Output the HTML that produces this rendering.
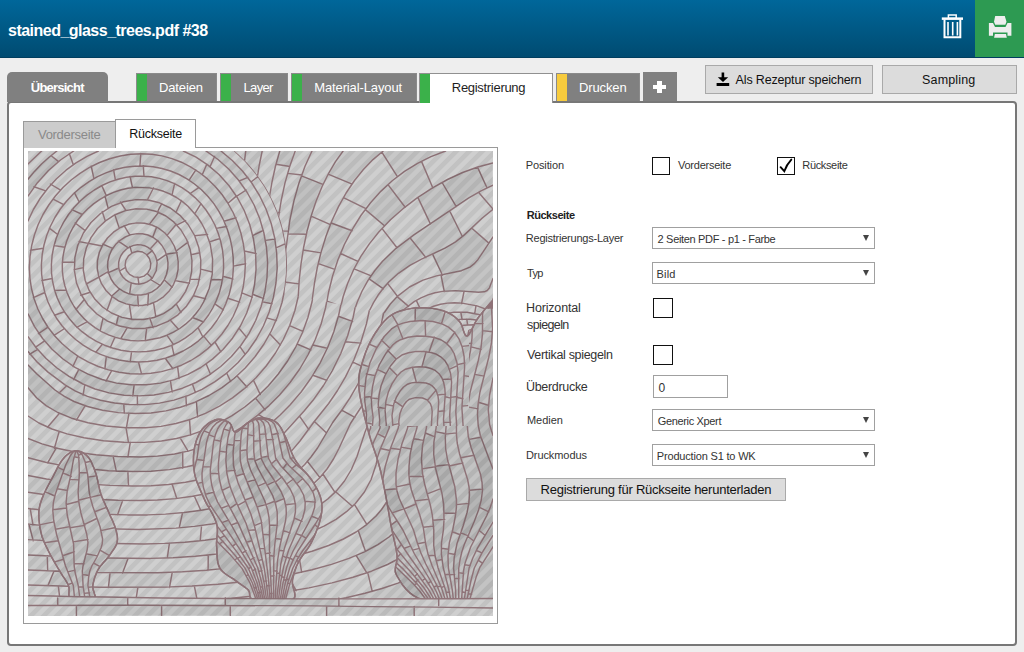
<!DOCTYPE html>
<html><head><meta charset="utf-8">
<style>
*{margin:0;padding:0;box-sizing:border-box}
html,body{width:1024px;height:652px;overflow:hidden;background:#eeeeee;font-family:"Liberation Sans",sans-serif;position:relative}
.a{position:absolute}
.t{position:absolute;line-height:1;white-space:nowrap}
.tab{position:absolute;top:73px;height:28px;background:#808080;border:1px solid #8a8a8a;border-bottom:none}
.bar{position:absolute;left:0;top:0;width:10px;bottom:0;background:#3bb14a}
.btn{position:absolute;background:#dcdcdc;border:1px solid #a9a9a9}
.cb{position:absolute;border:1.5px solid #111;background:#fff}
.sel{position:absolute;left:652px;width:223px;height:22px;border:1px solid #a0a0a0;background:#fff}
.sel i{position:absolute;right:5px;top:7px;width:0;height:0;border-left:3.5px solid transparent;border-right:3.5px solid transparent;border-top:6px solid #444}
</style></head><body>
<div class="a" style="left:0;top:0;width:1024px;height:58px;background:linear-gradient(#00679a,#004b71);border-bottom:1px solid #003e5f"></div>
<div class="a" style="left:975px;top:0;width:49px;height:57px;background:#2d9a52"></div>
<svg class="a" style="left:930px;top:5px" width="40" height="40" viewBox="930 5 40 40">
 <rect x="941.8" y="17.4" width="21.2" height="2.5" fill="#fff"/>
 <rect x="948.4" y="15" width="7.8" height="3.4" fill="none" stroke="#fff" stroke-width="1.5"/>
 <path d="M944.5 19.5 V37.2 H960.3 V19.5" fill="none" stroke="#fff" stroke-width="2"/>
 <rect x="947.2" y="22" width="1.6" height="13.5" fill="#fff"/>
 <rect x="951.9" y="22" width="1.6" height="13.5" fill="#fff"/>
 <rect x="956.6" y="22" width="1.6" height="13.5" fill="#fff"/>
</svg>
<svg class="a" style="left:980px;top:8px" width="40" height="40" viewBox="980 8 40 40">
 <path d="M995.2 16.1 H1004.8 L1006.5 21.8 L1005.3 24.7 H995.2 L994 21.8 Z" fill="#eeeeee"/>
 <path d="M988.9 23 H993 L995 26.9 H1005.5 L1007.5 23 H1011.4 V35.7 H1007.5 V32.6 H993 V35.7 H988.9 Z" fill="#eeeeee"/>
 <path d="M994.9 34 H1006 L1006.8 37.7 H994.1 Z" fill="#eeeeee"/>
</svg>
<div class="t" style="left:8.0px;top:22.6px;font-size:16px;letter-spacing:-0.515px;color:#ffffff;font-weight:bold">stained_glass_trees.pdf #38</div>
<div class="a" style="left:7px;top:101px;width:1010px;height:545px;background:#fff;border:2px solid #777;border-radius:4px"></div>
<div class="a" style="left:7px;top:72px;width:101px;height:30px;background:#808080;border-radius:5px 5px 0 0"></div>
<div class="t" style="left:30.8px;top:80.5px;font-size:13px;letter-spacing:-0.775px;color:#ffffff;font-weight:bold">Übersicht</div>
<div class="tab" style="left:136px;width:81px"><div class="bar"></div></div>
<div class="tab" style="left:220px;width:68px"><div class="bar"></div></div>
<div class="tab" style="left:291px;width:126px"><div class="bar"></div></div>
<div class="tab" style="left:419px;width:134px;height:30px;background:#fff;border-color:#909090"><div class="bar"></div></div>
<div class="tab" style="left:556px;width:84px"><div class="bar" style="background:#f7cb3d"></div></div>
<div class="tab" style="left:643px;top:72px;width:34px;height:29px;border:none"></div>
<div class="a" style="left:653.3px;top:84.9px;width:13.1px;height:4.1px;background:#fff"></div>
<div class="a" style="left:657.4px;top:80.7px;width:4.6px;height:12.3px;background:#fff"></div>
<div class="t" style="left:158.9px;top:80.9px;font-size:13px;letter-spacing:-0.1px;color:#ffffff">Dateien</div><div class="t" style="left:243.5px;top:80.9px;font-size:13px;letter-spacing:-0.65px;color:#ffffff">Layer</div><div class="t" style="left:314.2px;top:80.9px;font-size:13px;letter-spacing:-0.114px;color:#ffffff">Material-Layout</div><div class="t" style="left:451.8px;top:80.9px;font-size:13px;letter-spacing:-0.3px;color:#1e1e1e">Registrierung</div><div class="t" style="left:578.9px;top:80.9px;font-size:13px;letter-spacing:-0.1px;color:#ffffff">Drucken</div>
<div class="btn" style="left:705px;top:65px;width:168px;height:29px"></div>
<svg class="a" style="left:716px;top:72px" width="14" height="15" viewBox="0 0 14 15">
 <rect x="5.6" y="0.5" width="2.6" height="6" fill="#000"/>
 <path d="M1.8 5.2 H12.2 L7 10 Z" fill="#000"/>
 <rect x="0.6" y="11" width="12.6" height="3" fill="#000"/>
</svg>
<div class="t" style="left:735.6px;top:74.4px;font-size:12.5px;letter-spacing:-0.162px;color:#111111">Als Rezeptur speichern</div>
<div class="btn" style="left:882px;top:65px;width:135px;height:29px"></div>
<div class="t" style="left:922.0px;top:74.4px;font-size:12.5px;letter-spacing:0.171px;color:#111111">Sampling</div>
<div class="a" style="left:23px;top:121px;width:93px;height:27px;background:#cccccc;border:1px solid #9a9a9a;border-bottom:none"></div>
<div class="a" style="left:115px;top:119px;width:81px;height:29px;background:#fff;border:1px solid #9a9a9a;border-bottom:none"></div>
<div class="t" style="left:38.0px;top:128.3px;font-size:13px;letter-spacing:-0.3px;color:#8a8a8a">Vorderseite</div><div class="t" style="left:129.2px;top:127.7px;font-size:12.5px;letter-spacing:-0.225px;color:#111111">Rückseite</div>
<div class="a" style="left:23px;top:147px;width:475px;height:477px;border:1px solid #9a9a9a;border-top:none"></div>
<div class="a" style="left:196px;top:147px;width:302px;height:1px;background:#9a9a9a"></div>
<svg class="a" style="left:28px;top:151px" width="465" height="465" viewBox="28 151 465 465">
<defs>
<pattern id="stp" width="9.19" height="20" patternUnits="userSpaceOnUse" patternTransform="rotate(45)"><rect width="9.19" height="20" fill="#cfcfcf"/><rect x="4.6" width="4.6" height="20" fill="#c2c2c2"/></pattern>
<pattern id="stpd" width="9.19" height="20" patternUnits="userSpaceOnUse" patternTransform="rotate(45)"><rect width="9.19" height="20" fill="#c3c3c3"/><rect x="4.6" width="4.6" height="20" fill="#b4b4b4"/></pattern>
<clipPath id="skyc"><path d="M234.5 151L493 151L493 334.7L284.2 293.4L284.2 293.4L285.1 288L285.9 282.6L286.5 277.2L286.8 271.8L287 266.3L287 260.9L286.7 255.4L286.3 250L285.7 244.6L284.8 239.2L283.8 233.8L282.6 228.5L281.2 223.2L279.6 218L277.8 212.9L275.8 207.8L273.6 202.8L271.3 197.9L268.8 193.1L266.1 188.3L263.2 183.7L260.1 179.2L256.9 174.7L253.6 170.5L250.1 166.3L246.4 162.3L242.6 158.4L238.6 154.6L234.5 151Z"/></clipPath>
<clipPath id="sunc"><path clip-rule="evenodd" d="M28 151H493V616H28ZM234.5 151L493 151L493 334.7L284.2 293.4L284.2 293.4L285.1 288L285.9 282.6L286.5 277.2L286.8 271.8L287 266.3L287 260.9L286.7 255.4L286.3 250L285.7 244.6L284.8 239.2L283.8 233.8L282.6 228.5L281.2 223.2L279.6 218L277.8 212.9L275.8 207.8L273.6 202.8L271.3 197.9L268.8 193.1L266.1 188.3L263.2 183.7L260.1 179.2L256.9 174.7L253.6 170.5L250.1 166.3L246.4 162.3L242.6 158.4L238.6 154.6L234.5 151Z"/></clipPath>
<clipPath id="t0"><path d="M75.2 450.8L76.7 450.8L78.3 450.9L79.9 451.4L81.5 452L83.1 452.8L84.6 453.8L86.1 454.9L87.4 456.2L88.6 457.7L89.8 459.4L90.9 461.2L91.9 463.3L92.8 465.5L93.8 467.7L94.6 470L95.5 472.4L96.3 474.9L97 477.5L97.6 480.2L98.2 483L98.8 485.9L99.4 488.7L100.1 491.4L100.9 494L101.8 496.5L102.8 499L103.8 501.4L104.9 503.8L105.9 506.1L107 508.4L108 510.7L109 512.9L109.9 515.1L110.9 517.2L111.9 519.3L112.8 521.3L113.6 523.3L114.4 525.2L115.1 527.1L115.7 529L116.2 530.8L116.6 532.6L117 534.3L117.3 535.9L117.4 537.6L117.5 539.2L117.3 540.8L117 542.5L116.5 544.2L115.7 545.9L114.8 547.6L113.8 549.2L112.6 550.9L111.4 552.6L110.2 554.3L109 556L107.7 557.7L106.4 559.3L104.9 560.9L103.4 562.6L102 564.2L100.6 565.9L99.3 567.7L98.2 569.5L97.2 571.4L96.3 573.4L95.5 575.5L94.7 577.5L94.1 579.6L93.6 581.7L93.1 583.7L92.8 585.7L92.8 587.7L93.2 589.7L93.9 591.8L94.5 593.9L95.1 595.8L95.3 597.5L95 598.9L94.1 600L92.3 600.8L89.6 601.3L86.4 601.7L82.9 601.8L79.4 601.7L76.1 601.3L73.3 600.8L71.2 600L69.9 598.9L69.2 597.4L68.9 595.6L68.9 593.7L69 591.6L69.1 589.6L69 587.5L68.5 585.7L67.8 584L66.9 582.4L66 580.8L65 579.2L63.9 577.6L62.7 575.9L61.6 574.1L60.4 572.2L59.2 570.1L57.8 567.9L56.4 565.5L55 563.1L53.6 560.6L52.2 558.2L50.8 555.7L49.6 553.3L48.4 551L47.3 548.6L46.1 546.3L45 544L44 541.7L43.1 539.3L42.2 536.9L41.5 534.4L40.9 531.8L40.3 529.1L39.8 526.3L39.4 523.5L39.1 520.7L38.9 518L38.8 515.4L38.8 512.9L38.9 510.6L39.2 508.5L39.6 506.6L40 504.6L40.6 502.7L41.3 500.8L42 498.8L42.8 496.7L43.7 494.5L44.8 492.2L45.9 489.8L47.1 487.4L48.4 485L49.7 482.6L51 480.2L52.3 477.8L53.6 475.4L54.9 472.8L56.2 470.2L57.5 467.7L58.9 465.2L60.3 462.9L61.7 460.7L63.1 458.9L64.5 457.3L66 455.8L67.5 454.5L69.1 453.3L70.6 452.4L72.1 451.6L73.7 451.1Z"/></clipPath>
<clipPath id="t1"><path d="M216.6 419.5L218.3 419.2L220 419.2L221.7 419.5L223.4 419.9L225 420.4L226.5 421.1L227.9 421.8L229.2 422.6L230.2 423.6L231.1 425L231.7 426.5L232.3 428.1L232.9 429.6L233.6 430.9L234.4 431.8L235.5 432.1L236.8 431.8L238.2 430.9L239.8 429.7L241.5 428.2L243.2 426.6L244.9 425.1L246.6 423.7L248.2 422.6L249.8 421.7L251.3 420.9L252.8 420.1L254.3 419.4L255.8 418.8L257.4 418.3L259.1 418L260.8 417.9L262.7 418L264.7 418.2L266.8 418.5L268.9 419L271 419.6L273 420.4L274.9 421.4L276.6 422.6L278.1 424L279.4 425.6L280.6 427.4L281.8 429.4L282.8 431.5L283.9 433.7L285 436L286.1 438.4L287.2 440.9L288.3 443.6L289.4 446.4L290.4 449.2L291.5 452.2L292.7 455L294 457.8L295.5 460.5L297.2 463L299.1 465.5L301.2 467.9L303.4 470.2L305.6 472.5L307.6 474.8L309.6 477.2L311.3 479.5L312.9 481.9L314.3 484.2L315.7 486.6L317 488.9L318.2 491.3L319.2 493.7L320.1 496L320.8 498.4L321.3 500.7L321.7 503L321.9 505.2L322 507.5L321.9 509.8L321.7 512.2L321.3 514.7L320.8 517.4L320.1 520.3L319.2 523.4L318.1 526.7L316.8 530.1L315.5 533.4L314.1 536.7L312.7 539.8L311.3 542.7L309.8 545.4L308.2 547.9L306.5 550.3L304.8 552.5L303.1 554.8L301.5 557L300 559.3L298.7 561.6L297.6 564L296.5 566.3L295.6 568.7L294.8 571.1L294 573.4L293.4 575.8L292.8 578.2L292.4 580.6L292.4 583.1L292.8 585.9L293.6 588.7L294.4 591.5L294.9 594.1L294.9 596.5L294.2 598.5L292.4 600L289.3 601L284.8 601.6L279.6 601.9L273.8 601.8L268.1 601.6L262.6 601.2L258 600.6L254.5 600L252.2 599.2L250.9 598.2L250.1 597L249.8 595.6L249.6 594.1L249.5 592.7L249.1 591.3L248.2 590L246.9 588.8L245.5 587.7L244 586.6L242.4 585.5L240.8 584.3L239 583.2L237.3 581.9L235.5 580.6L233.6 579.2L231.5 577.9L229.2 576.5L227 575L224.8 573.5L222.8 571.8L221.1 570L219.7 567.9L218.7 565.6L218 563L217.5 560.3L217.2 557.4L217 554.5L216.9 551.5L216.8 548.6L216.6 545.8L216.5 543.1L216.7 540.4L216.9 537.7L217.2 534.9L217.4 532.2L217.4 529.5L217.2 526.6L216.6 523.7L215.6 520.7L214.3 517.6L212.7 514.4L210.9 511.2L209.1 508L207.2 504.8L205.5 501.6L204 498.4L202.6 495.2L201.2 492.1L199.8 488.9L198.5 485.8L197.2 482.7L196.1 479.5L195.2 476.4L194.5 473.2L194 470L193.6 466.7L193.5 463.4L193.4 460.2L193.5 456.9L193.7 453.8L194.1 450.8L194.5 447.9L195.1 445.2L195.8 442.5L196.6 439.9L197.6 437.5L198.6 435.1L199.8 432.9L201.1 430.9L202.4 429L203.9 427.3L205.5 425.7L207.3 424.2L209.2 422.9L211.1 421.7L213 420.8L214.9 420Z"/></clipPath>
<clipPath id="t2"><path d="M358.8 386.7L358.7 382.5L358.8 378.6L359.2 375.1L359.8 371.7L360.6 368.5L361.4 365.4L362.4 362.2L363.4 359L364.5 355.7L365.7 352.3L367 349L368.4 345.8L369.9 342.6L371.5 339.5L373.2 336.5L374.9 333.7L376.7 331L378.5 328.3L380.4 325.8L382.4 323.3L384.4 321.1L386.5 318.9L388.7 317L391 315.3L393.4 313.8L395.8 312.6L398.4 311.6L401.1 310.7L403.7 310L406.4 309.4L409.1 308.9L411.7 308.4L414.3 308L417 307.8L419.7 307.7L422.4 307.7L425 307.8L427.6 307.9L430.1 308.1L432.5 308.4L434.8 308.7L437 309.1L439.1 309.6L441.1 310.1L443.1 310.7L445 311.4L446.8 312.2L448.6 313L450.3 313.9L451.9 314.9L453.4 315.9L454.9 317L456.3 318.2L457.6 319.5L458.8 320.8L460 322.2L461.1 323.9L462 326.1L462.8 328.4L463.5 330.8L464.3 333L465.1 334.7L466 335.8L467 336L468.2 335.3L469.4 333.7L470.7 331.6L472 329L473.4 326.1L474.9 323.2L476.4 320.5L478 318L479.8 315.6L481.8 313.1L483.9 310.5L486.1 307.9L488.2 305.4L490.1 303.2L491.7 301.4L493 300L493.9 297.1L494.5 291.7L494.8 285.5L494.9 280.1L495 277.2L494.9 278.5L494.9 285.5L495 300L495.6 325.2L496.8 360.9L498.3 403.7L499.6 450L500.3 496.3L500 539.1L498.4 574.8L495 600L489.2 614.5L481.2 621.7L471.6 623L461.2 620.2L450.5 614.9L440.3 608.7L431.3 603.2L424 600L418.3 598.1L413.5 595.6L409.5 592.6L406.1 589.3L403.2 585.8L400.8 582.4L398.8 579L397 576L395.7 573.3L395.2 570.8L395.3 568.3L395.7 565.9L396.3 563.4L396.8 560.8L397.1 558L397 555L396.5 551.7L395.9 548.2L395.2 544.5L394.4 540.8L393.5 536.9L392.6 532.9L391.8 529L391 525L390.2 521L389.5 516.8L388.8 512.6L388 508.3L387.2 504.1L386.5 499.9L385.8 495.9L385 492L384.3 488.4L383.6 485L383 481.8L382.3 478.6L381.6 475.4L380.9 472.2L380 468.7L379 465L377.9 461.1L376.6 457L375.2 452.8L373.7 448.5L372.2 444.1L370.7 439.5L369.3 434.8L368 430L366.7 424.9L365.2 419.4L363.8 413.7L362.4 407.9L361.2 402.2L360.1 396.6L359.3 391.4Z"/></clipPath>
<clipPath id="t2c0"><path clip-rule="evenodd" d="M350 295H469V426H350Z"/></clipPath>
<clipPath id="t2c1"><path clip-rule="evenodd" d="M20 140H500V620H20Z M350 295H469V426H350Z"/></clipPath>
</defs>
<rect x="28" y="151" width="465" height="465" fill="url(#stp)"/>
<g fill="none" stroke="#8f7378" stroke-width="1.45" stroke-linecap="round" stroke-linejoin="round">
<path clip-path="url(#sunc)" d="M139.3 277.5L144 276.1L147.8 273L150.2 268.5L150.8 263.5L149.4 258.5L146.5 254.5L142.5 252L137.5 251.3L132.5 252.8L128.5 255.9L125.8 260.5L125.1 265.5L126.4 270.5L129.5 274.4L134 276.9L139.3 277.5M140 284L143.5 283.3L147 281.9L150 280L153 277L156.3 270.5L157.1 263L156.5 259L155.2 255.5L153.4 252.5L150.8 249.5L148 247.4L144.5 245.7L141 244.9L137.5 244.7L133.5 245.4L130 246.8L126.5 249L123.5 251.9L121 255.5L119.5 259L118.7 262.5L118.6 266.5L119.2 270L120.6 273.5L122.9 277L125.5 279.6L129 281.9L132.5 283.3L136 284L140 284M141.1 295L146.5 294L152 291.8L157 288.5L161 284.5L164.1 280L166.5 274.5L167.8 268.5L168 262.5L167 256.5L164.9 250.5L161.9 245.5L158 241.1L153.3 237.5L148 235L142.5 233.7L137 233.6L131 234.6L125.5 236.8L120 240.3L115.5 244.6L111.7 250L109.3 255.5L107.9 261.5L107.7 267.5L108.8 273.5L111 279L114.3 284L118.5 288.2L123.5 291.5L129 293.8L135 295L141.1 295M142.2 305.5L150 304L157 301.1L163.5 296.8L169 291.3L173.3 285L176.4 277.5L178.1 269.5L178.2 261.5L176.9 253.5L174.3 246L170.2 239L164.9 233L158.5 228.2L151.8 225L144.5 223.2L136.5 222.9L128.5 224.3L120.6 227.5L113.5 232.2L107.5 238L102.7 245L99.3 252.5L97.5 260.5L97.3 268.5L98.7 276.5L101.5 283.7L106 290.5L111.5 296.1L118.5 300.8L126 303.9L134 305.5L142.2 305.5M143.7 319.5L154 317.5L163.5 313.6L172 308L179.6 300.5L185.5 291.6L189.5 282L191.7 271.5L192 260.5L190.2 249.5L186.6 239.5L181 230L174 222.2L165.9 216L156.5 211.5L146.5 209.1L136 208.7L125.5 210.6L115 214.7L105.5 220.9L97.5 228.5L91 237.6L86.3 248L83.7 259L83.3 270L85.2 280.5L89.2 290.5L95 299.3L102.6 307L111.5 313L122 317.4L133 319.5L143.7 319.5M144.6 328.5L156.5 326.2L168 321.4L178 314.8L186.5 306.2L193.3 296L198 284.7L200.5 272.5L200.8 260L198.8 247.5L194.6 235.5L188.1 224.5L180 215.3L170.3 208L159.5 202.8L148 200L136 199.6L123.5 201.7L111.5 206.4L100.5 213.5L91 222.5L83.4 233L77.9 245L74.9 257.5L74.4 270.5L76.5 283L81.1 294.5L87.9 305L96.9 314L107.5 321.1L119.5 326L132 328.5L144.6 328.5M145.8 340.5L160 337.7L167 335.2L173.5 332.2L179.7 328.5L185.5 324.2L190.7 319.5L195.6 314L200 308.1L203.6 302L209.2 288.5L212.3 274L212.6 259L210.2 244L205.1 230L201.7 223.5L197.5 217L188 206.2L182.5 201.6L176.5 197.5L170 194L163.5 191.3L156.5 189.2L149.5 187.9L135.5 187.4L128 188.3L120.5 190L113.5 192.4L106.5 195.5L100 199.3L93.5 203.9L87.6 209L82.3 214.5L77.5 220.5L73 227.5L69.4 234.5L66.6 241.5L64.4 249L63 256.5L62.3 264L62.4 271.5L63.3 279L64.9 286L67.2 293L70.3 300L74.1 306.5L78.5 312.5L83.5 318.1L89 323.2L95 327.6L101.5 331.6L108.5 334.9L115.5 337.4L123 339.3L130.5 340.5L138 340.9L145.8 340.5M147 351.5L155.5 350.2L163.5 348.2L171 345.6L178.5 342.1L185.5 337.9L192.2 333L198.2 327.5L203.7 321.5L208.6 315L212.8 308L216.4 300.5L219.4 292.5L221.5 284.5L223 276L223.6 267.5L223.4 258.5L222.5 250L220.7 241.5L218.1 233L214.9 225L210.9 217.5L206 210L200.8 203.5L195 197.6L188.5 192.1L182 187.7L174.5 183.7L167 180.6L159.5 178.4L151.5 176.8L143.5 176.2L135 176.3L126.5 177.3L118 179.2L110 181.9L102 185.5L94.2 190L87 195.1L80.2 201L74 207.5L68.5 214.5L63.5 222.3L59.5 230L56.1 238.5L53.7 247L52.1 255.5L51.4 264.5L51.5 273L52.6 281.5L54.5 289.9L57.3 298L60.7 305.5L65 312.8L70 319.6L75.7 326L82 331.7L89 336.9L96.5 341.4L104.5 345.2L112.5 348L121 350.2L129.5 351.5L138.5 351.9L147 351.5M148 361.5L157 360.2L166 358L174.5 355L183.1 351L191 346.3L198.5 340.8L205.4 334.5L211.5 327.8L216.9 320.5L221.7 312.5L225.7 304L229 295L231.3 286L232.8 276.5L233.4 267L233.2 257.5L232.1 248L230.1 238.5L227.2 229L223.5 220L219 211.6L214 203.9L208 196.5L201.5 189.8L194.5 184L187 178.9L179 174.5L170.5 171L162 168.5L153 166.8L144 166L134.5 166.2L125 167.3L115.5 169.5L106.5 172.6L97.5 176.6L89 181.6L81 187.3L73.5 193.8L66.5 201.2L60.3 209L54.9 217.5L50.3 226.5L46.7 235.5L44 245L42.2 254.5L41.4 264.5L41.6 274L42.8 283.5L44.8 292.5L47.8 301.5L51.7 310L56.5 318.2L62.2 326L68.5 333L75.6 339.5L83.5 345.3L91.5 350.1L100.5 354.4L109.5 357.6L119 360L128.5 361.5L138.5 362L148 361.5M140.8 374L151 373.3L161.5 371.6L171.5 368.9L181.5 365.2L190.9 360.5L199.5 355.1L207.5 348.9L215 341.9L221.9 334L227.9 325.5L233.1 316.5L237.3 307L240.8 297L243.3 286.5L244.7 276L245.3 265L244.8 254L243.3 243.5L240.9 233L237.5 222.5L233.1 212.5L227.8 203L222 194.5L215 186.2L207.5 178.9L199.4 172.5L190.5 166.8L181.5 162.2L172 158.6L162 155.9L152 154.3L141.5 153.7L130.5 154.3L120 156L109.5 158.7L99.5 162.5L89.5 167.4L80 173.3L71.2 180L63 187.5L55.4 196L48.8 205L43 214.5L38.2 224.5L34.4 235L31.7 245.5L30 256.5L29.4 267.5L29.9 278L31.5 288.5L34.2 299L37.9 309L42.6 318.5L48.2 327.5L54.8 336L62 343.5L70.1 350.5L79 356.8L88.5 362.2L98.3 366.5L108.5 369.9L119 372.3L130 373.7L140.8 374M98.4 151L87 156.3L76 162.8L66 170.2L56.5 178.7L48 188L40.1 198.5L33.4 209.5L28 220.9M28 313.9L34.5 326.6L42.6 338.5L52 349.2L63 359L75 367.3L88 374.1L102 379.5L116.5 383.1L131 384.8L146 384.8L160.5 383.1L174.5 379.6L188 374.4L200.8 367.5L212.5 359.1L223 349.5L232.5 338.2L240.4 326L246.7 313L251.5 299L254.6 284.5L256 269.5L255.6 254L253.5 239L249.7 224.5L244.2 210.5L237.3 197.5L228.9 185.5L219 174.5L208 165.1L196 157.2L183.3 151M73.7 151L60.5 160L48.5 170.5L37.5 182.7L28 196M28 336.6L36.4 348L46.1 358.5L57 368L69 376.3L83 384L95 389L109 392.9L124 395.2L139.5 395.9L154 395L168.5 392.4L182.5 388.2L196 382.5L209 375.1L220.7 366.5L231.4 356.5L240.8 345.5L249 333.4L255.7 320.5L261.1 306.5L264.9 292L267 277.5L267.6 262.5L266.5 247.5L263.9 233L259.7 218.5L254.1 205L246.9 192L238.4 180L228.6 169L218 159.5L205.9 151M56.9 151L49 157.2L41.5 164L34.5 171.4L28 179.2M28 351.6L37.5 362.4L48 372.1L65 384.8L75.5 391.1L87.5 396.4L100.5 400.3L114.5 403L129.5 404.5L145 404.6L159.5 403.1L174 400.1L188.5 395.4L202 389.3L215 381.7L227 372.8L238.1 362.5L248 351L256.3 339L263.4 326L269.2 312L273.4 297.5L276 283L277.2 268L276.7 253L274.7 238L271.2 223.5L266 209L259.5 195.5L251.8 183L242.5 171L232.3 160.5L221 151M41.6 151L28 164.1M28 365L36.9 374L55 390L64 396.2L74 401.5L87.5 406.5L102.5 410.2L118.5 412.6L135.5 413.5L151 413L166 410.9L180.5 407.3L195 402.2L209 395.5L222 387.6L234 378.5L245.2 368L255.2 356.5L264 344L271.3 331L277.4 317L282 302.5L285.1 287.5L286.7 272.5L286.7 257L285.2 242L282.1 227L277.6 212.5L271.5 198.5L264.3 185.5L255.6 173L245.7 161.5L234.6 151M28 387.8L36.5 397.7L46 405.6L57.7 412.5L71.5 418.2L88 422.8L106 426L126 427.7L145.5 427.8L161 426.4L176 423.5L191 419.2L205.5 413.4L219.5 406.2L232.5 397.9L244.6 388.5L256 377.7L266.2 366L275.5 353L283.3 339.5L289.7 325.5L294.9 310.5L298.5 295.5L300.8 280L301.5 264.5L300.8 249L298.5 233.5L294.9 218.5L289.7 203.5L283 189L275.2 175.5L266 162.8L255.7 151M28 416L38.9 423L52 429L67 433.9L84 437.8L103.5 440.7L124 442.2L144 442.4L161.5 441L176.5 438.5L190.5 434.9L204 430.1L217.5 423.9L232 415.7L244.7 407L256.9 397L268.1 386L278.3 374L287.6 361L295.7 347L302.5 332.5L307.9 317.5L312 302L314.7 286L315.9 270L315.7 254L314 238L311 222.5L306.5 207L300.6 192L293.3 177.5L284.9 164L275.1 151M28 438.4L42 443.9L58.3 448.5L76.5 452.2L96 454.8L118 456.5L140.5 457L157.5 456.1L174.5 454L189 450.9L203 446.8L216 441.7L228.5 435.4L241.5 427.3L257.5 415.4L269 405.6L279.5 395L290.1 382.5L299.7 369L308.2 354.5L315.3 339.5L321.1 324L325.5 308L328.5 292L330.2 275.5L330.4 259L329.2 242.5L326.6 226L322.6 210L317.3 194.5L310.5 179.1L302.5 164.5L293.5 151M28 457.7L45.5 462.3L65 466.1L86 468.8L108.5 470.7L131.5 471.5L151 471.2L169.5 469.6L187 466.8L202 463.2L216 458.6L229 453.1L241.4 446.5L251.5 439.8L261.5 431.9L280.1 415L290 405L301.1 392L311.1 378L320 363.1L327.5 347.8L333.7 332L338.6 315.5L342.2 298.5L344.3 281.5L345 264.5L344.3 247.5L342.2 230.5L338.6 213.5L333.7 197L327.4 181L319.8 165.5L311.1 151M28 475.5L46.5 479L66.5 481.9L88 484L110 485.4L132.5 486L151 485.7L168.5 484.5L185.5 482.3L201 479.3L216 475.3L229.5 470.6L242.2 465L253.5 458.8L264.1 451.5L274 443.2L283.5 433.7L304.1 411L313 400.3L323.5 385.5L332.5 370.5L340.8 353.5L347.6 336L353.1 317.5L356.8 299L359 280L359.5 260.5L358.3 241.5L355.5 222.5L351 203.7L344.9 185.5L337.4 168L328.2 151M28 492.2L49 495.3L71 497.6L94 499.3L118 500.3L140.5 500.5L157.5 500L175.5 498.6L192.5 496.3L208.5 493.3L224 489.4L238 484.9L251.1 479.5L262.8 473.5L273.5 466.7L283.2 459L292 450.4L300 441L313.9 422L328.7 403.5L337.5 390.5L345.5 376.9L353.8 360L360.9 342L366.4 324L370.4 305.5L373 286L374 266L373.3 246L370.8 226L366.8 206.5L361.1 187.5L353.8 169L344.9 151M28 508.4L51.5 511L76 513L101.5 514.3L127.5 514.9L147.5 514.9L165.5 514.1L184 512.5L201.5 510.2L218.8 507L235 503L250 498.3L263.3 493L275.5 486.9L286.5 480.1L296 472.8L304.7 464.5L311 457L317.5 448L332.7 422.5L342.6 409L350 397.9L360.8 379L368.5 362.5L375.2 345L380.6 327L384.5 309L387.3 289L388.5 268.5L388 248L385.8 228L382 208L376.7 188.5L369.8 169.5L361.3 151M28 524.1L54 526.5L81.5 528.1L138.5 529.5L176 528.1L194.5 526.4L212 524L230 520.7L247 516.6L262.5 511.9L277 506.4L289.5 500.4L301 493.5L311 486L319.5 478L327 469L333.5 459L338.7 449L350.5 423.5L365.7 400L377.2 378.5L384.4 362L390.3 345.5L395.2 328.5L398.9 311L401.7 291L402.9 270.5L402.6 250L400.7 229.5L397.2 209.5L392.2 189.5L385.6 170L377.5 151M28 539.6L85 543L144 544L164.5 543.4L185 542.2L205 540.2L224 537.6L243 534.2L261 530L277.5 525.1L292.5 519.5L305.5 513.5L317.5 506.6L327.8 499L336.5 490.9L344.5 481L351.4 469.5L357 456.5L364.9 432.5L368.2 424L383.8 397.5L394.9 374.5L401 359L406.2 343L410.4 327L413.7 310.5L416.3 290.5L417.4 270L417.1 249.5L415.3 229.5L412 209.5L407.2 189.5L401 170L393.4 151M28 554.9L89 557.8L150.5 558.4L173 557.7L195.5 556.2L217 554L237.5 551.2L258 547.5L277 543.2L294.5 538.1L309.9 532.5L324 526.1L336 519.3L346.5 511.7L355.4 503.5L364.4 492L371.1 479.5L376.1 464.5L382.4 435L385.5 424.5L387.2 420.5L395 407.3L401.9 394L413.2 368L418.2 353.5L422.4 339L425.9 324L428.6 309L431 289L432 269L431.6 248.5L429.8 228.5L426.6 208.5L422.1 189L416.4 170L409.2 151M28 569.9L94 572.5L157.5 572.8L182.5 571.8L206.5 570.2L229.5 567.9L251.5 564.9L273.5 561L293.5 556.5L312 551.3L328.6 545.5L343.4 539L356.1 532L367 524.3L376.1 516L381.6 509.5L386.3 502.5L390 495.3L393 487.5L396.7 471L399.9 438.5L402.2 426L404.2 420.5L412.4 405.5L419.4 391L429.7 365L434.3 350.5L438.2 335.5L441.4 320.5L443.8 305.5L445.7 286L446.5 266.5L446 246.5L444.2 227L441.2 207.5L437 188.5L431.5 169.5L424.9 151M28 584.9L99.5 587.2L165 587.1L192 586L218 584.2L243 581.7L267.1 578.5L290.5 574.5L312 569.8L331.5 564.4L349 558.4L364.5 551.8L378 544.6L389 537L398.5 528.5L404.4 521.5L408.9 514.5L412.6 507L415.4 498.5L417.2 489.5L418.2 479.5L417.7 441L418.1 433L419.2 426L420.9 420.5L429 404.7L436 389L445.9 362L450.3 347L454 331.5L456.9 316L459 300L460.6 281L461 262L460.3 243L458.5 224.5L455.6 205.5L451.6 187L446.6 169L440.4 151M28 599.8L106 601.8L144 602L173.5 601.5L203 600.2L231.5 598.2L258.5 595.5L284.5 592L309 587.9L332 582.9L353 577.3L371.5 571.2L387.6 564.5L401.8 557L413.6 549L423.1 540.5L430 532L435.2 523L438.7 513.5L440.6 503L441.2 493.5L440.7 483L435.4 440L435.3 431.5L436.2 424.5L437.3 420.5L445.3 404L452.1 388L457.4 373.5L462.1 358.5L466.4 342.5L469.8 326L472.5 309.5L474.3 293L475.3 275L475.4 257L474.5 239L472.7 221L469.8 203L466.1 185.5L461.4 168L455.8 151M174.9 616L229 613.4L279.5 608.7L325 602L346 597.8L365 593.3L382 588.5L398 583.1L411.6 577.5L424 571.4L435 564.6L444 557.7L451.4 550.5L457.4 542.5L461.7 534.5L464.5 526L466.1 516.5L466.3 506.5L465.5 497.5L463.8 487.5L453.4 444L452.2 434L452.4 425.5L453.6 420.5L462 402L469.3 383.5L474.7 367L479.3 350.5L483.4 332.5L486.5 314L488.6 295.5L489.8 277L490 261L489.5 245L488.2 229L486.2 213L483.5 197L480.1 181.5L475.9 166L471.2 151M28 614.6L81 616M493 173.4L486.5 151M493 514.2L491.1 504.5L488.1 494L472 448.5L469.5 437.5L468.6 428.5L469.7 420.5L476.7 404.5L482.9 388.5L488.4 372L493 355.6M342.5 616L375.8 609.5L405 602L430 593.5L451 583.9L459.6 579L467.6 573.5L474.2 568L480.1 562L484.7 556L488.5 549.5L491.3 542.5L493 535.6M493 457.1L486.9 440L485.4 433L484.9 426.5L485.6 420.5L493 402.8M427.6 616L447.3 610L465 603.4L480 596.4L493 588.8M147.2 273.5L152.3 278.3M146.8 254.9L152.4 250.6M131.9 253.2L129.9 246.5M125.5 267.3L119.6 271M137.9 277.3L139 284.3M150.5 279.5L160.3 285.5M156.8 260.8L166.3 254.4M150.1 249L157.9 240.5M128.2 247.9L118.4 241.1M118.9 268L107.9 272.9M131.2 282.8L129.6 294.1M148.4 293.2L147.8 305.2M164.2 279.7L172.2 287.3M166.2 254.2L177.1 252.6M152.7 237.2L156.7 227M129.8 235.1L124.1 225.7M112.8 248.4L102.7 244.1M108.4 271.4L98.6 277.4M119.7 289L111.5 296.3M137.7 295L138.4 306M153.5 302.5L155.8 316.8M175.1 280.6L189.4 283.3M176.1 251L188.1 242.1M167 235.4L176.3 224.3M149.3 224.4L158.7 212.1M119.3 228.4L114.8 214.6M102.2 246L88 243.3M98.9 277.1L86.2 284M112.1 296.5L107 310.6M129.4 304.6L131.6 319.4M149.7 318.3L153.2 327.7M176.2 303.9L181 312.6M190.1 279.1L199.6 279.4M191.1 254.8L199.8 252.7M176.7 225.2L185.6 220.6M157.4 212L161.8 203.5M125.9 210.5L120.5 202.1M105.3 221L102.2 211.5M88.3 243.4L79 241.5M83.4 267.6L74.1 269.6M90.3 292.2L80.8 295.3M118.4 315.8L116.2 325.1M146.7 328.1L145.2 341M170.2 320L178.5 329.3M193.4 295.8L205.5 298.8M200.6 269.1L212.3 272M194.6 235.7L207.6 234.4M176 212.3L181.5 200.5M147.3 200L153.5 188M108.2 208.6L105 195.9M85.2 230.6L75.2 223M74.7 262.3L62.2 262.3M84.3 299.5L76 309.5M103 318.1L100.2 330.8M127.2 327.6L120.7 338.8M167 335.3L173.3 344.3M192.5 317.5L203.6 322M211.1 279.7L222.6 279.8M209.4 241.9L219.9 238.5M194.7 213.8L201 203.6M172 195L174.7 183.4M132.5 187.8L130.1 176.5M106.3 195.6L101.8 185.6M82.3 214.5L71.9 209.6M64.9 247.3L54 245.6M66.2 290L54.7 290.4M87.4 321.7L76.8 327.4M114.9 337.2L110.2 347.7M171.8 345.2L174.1 355.4M198 327.7L202.9 337M214.8 303.9L223.4 309.9M222.9 276.2L233 279M216.2 228.4L226.6 226.5M190.1 193.5L198.8 187.6M144 176.2L143.3 165.7M115.4 180.1L113.6 169.8M79.2 202L74.4 192.7M57.7 234.5L49.3 228.2M52.2 278.5L41.9 280.5M64.3 311.7L54.5 315.3M102.4 344.2L95.8 352.3M131.6 351.6L130.2 362M165.2 358.2L172.9 368.7M203.7 336.1L211.3 345.4M227.8 298.2L239.7 302.1M233.4 266.1L245.7 263.7M224 221.3L236 217.8M189 180.3L195.8 169.8M139.9 166.1L140.8 153.6M93.9 178.7L91.2 166M63.7 204.7L53.1 199.1M43.4 248.2L30.5 250.3M44.8 292.5L33.4 297.6M64.5 328.5L54.1 335.4M106.3 356.5L104.9 368.9M138.5 362L141.6 374.1M177.6 366.6L179.1 378.5M214.9 342L220.9 351.8M241.8 292.8L252.4 297.2M244.4 251L256.1 253.6M228 203.3L236.3 196.1M202.2 174.7L206.8 164.2M60.6 190.2L50.3 184M48 327.1L38.5 333.7M77.8 356L72.9 366.4M111.7 370.6L106 381.2M73.3 164.8L69.3 153.5M45.8 190.9L34 186.8M44.7 340.9L35.6 347.1M78.8 369.3L73.6 379.6M134.2 384.8L132.8 396.2M170.4 380.6L172.2 392M206.1 363.7L210.5 374.3M239 328.2L246.7 337.4M252.5 294.3L263.7 298.6M252.6 235.6L263.4 230.4M236.5 196.4L246.1 190M210 166.8L214.7 156.3M58.7 161.6L51.2 155.7M37.7 349.4L29.6 354.3M84.8 384.8L83.1 395.1M137.3 395.8L137.5 404.8M192.4 384L195.4 392.5M239.9 346.6L245.3 354.3M262.3 301.9L272.1 303.8M265.2 240.4L275.2 239.1M239.1 181L247.9 177.3M66.6 385.7L59 393M123.8 403.9L124.3 413.4M185.9 396.2L186.4 405.7M226.7 373L230.7 381.6M266.7 317.9L276.4 320.6M276 247.9L285.6 243.6M251 182L258.5 176.1M85.2 405.6L76.4 420.2M129 413.1L126.4 427.9M196.4 401.5L197.6 417M236.9 375.8L246.9 386.9M269.7 333.8L280.4 345M286.7 268L301.6 263.7M280.4 221.5L294 214.1M259.8 179L272.2 170.6M59.5 413.2L47.5 427.3M126 427.7L128.5 442.5M189.5 419.6L190.6 435.1M253.4 380.1L260.3 394.6M289.6 325.7L302.9 331.4M301.2 270.3L316.2 271.7M292.6 212L305.5 204.2M59.2 431.4L54.4 448.2M130.3 442.3L127.9 457.1M180 437.6L188.2 451.3M255.5 398.1L265.1 409.7M297.1 344L310.9 349.9M315 282.6L329 289.1M305.4 204.3L320.9 203.7M56.3 447.9L47.5 463.1M113.1 456.1L116.3 471.3M182.7 452.2L182.8 468.2M258.5 414.6L271.8 422.5M312.7 345L327.3 348.2M330.1 275.9L345 273.9M323 211.4L337.8 209.3M69.7 466.7L69 482.7M127.9 471.3L128.5 485.8M211.4 460.1L216 475.4M262.5 431.1L277 440.8M312.8 375.2L326.8 380.4M338.4 316.3L352.5 321.4M344.6 254.6L359.6 255.3M327.3 180.7L341.1 175M82.3 483.5L76.3 498.3M172.1 484L176.7 498.3M233.8 468.7L234.1 486.7M299.5 416.1L308.9 429.6M345.4 341.7L360.9 343.1M358.9 251.5L373.5 247.8M345.1 185.9L359.3 183.1M122.8 500.3L117.5 514.9M194.3 496L200.9 510.6M275.1 465.4L286 480.9M314.4 421.4L326.3 432.8M352.8 362.1L366.4 368.3M373.2 282.3L387.9 285.5M371.1 227.8L385 222.2M353.4 168.1L364.9 157.7M30.2 508.6L33 524.9M107.1 514.5L111.4 529.4M182.6 512.7L179.2 527.8M258.2 495L265.1 511.7M307.3 461.3L319.9 477.6M341.7 410.2L354.9 417.3M371.3 355.2L385.4 360.3M388.5 268.1L403 268.5M371.6 174.6L384.9 168.7M29 524.2L33.2 540.7M112.3 528.9L107.7 544.2M201.6 525.4L200.2 540.8M261.7 512.2L264.4 529.5M322.9 474L335 492.3M365.3 400.6L377.4 409.5M393.2 335.5L407.9 338.5M402.7 274.2L417.6 275.8M397.9 213.6L412.7 210.8M104.6 543.3L102.1 558.6M169.4 543.1L167.3 558M260.6 530.1L261.4 547.1M335.6 491.7L352.6 506.5M373.7 414.7L385.8 424.2M408.6 334.1L424 333.2M417.3 263.8L432.2 262.1M402.3 173.9L416.3 168.7M47.3 555.8L47.7 570.8M128.1 558.2L122.5 573.2M208.2 554.9L208.1 570.4M271 544.5L272.3 561.5M354.4 504.4L366.8 524.4M384.1 429.4L400 438.8M413.2 367.9L429.2 368.2M431 288.5L445.3 290.8M427 210.9L442 210.7M54 571L47.9 585.8M110.1 572.6L108.4 587.5M172.3 572.2L169.5 587.5M241.8 566.2L248.8 581.7M298.8 555.1L301.7 572.3M358.2 530.5L365.4 551.3M398.5 452.5L418.2 446.6M423.5 380.5L435.4 390.4M443.4 308L458.3 306.5M442.2 213.8L456.9 211M58.3 585.9L60.1 600.8M137.9 587.2L135.6 602M194.3 585.9L197.3 600.6M287.3 575L296.2 590.7M356.1 555.4L366.8 572.9M412.5 507.2L440.4 506.1M418.8 428.9L436.2 427.2M444.9 364.8L458.1 372M459 300.5L474 301M457.7 219.2L473 221.4M32.3 599.9L29.3 615.1M221.4 598.9L217.1 614.3M278.1 592.9L276.6 609.3M367.7 572.4L372.2 591.4M427.9 534.6L455.4 545.3M438.3 463.7L457.7 461.5M457.5 373.4L471.3 377.6M472.3 311L487.7 309.8M474.1 235.2L488.4 229M338 599.4L344.5 616.2M408.1 578.9L421.6 596.9M458.7 540L477.8 564.3M458.1 463.7L476.5 461.9M464.7 395.2L478.1 402M469.4 436.6L485.6 431.6M424.7 595.3L430.5 615.5M474.4 567.9L489.1 591.6"/>
<path clip-path="url(#skyc)" d="M470.6 616L454.5 612.6L438.5 608.3L423 603.1L407.5 596.8L392.5 589.7L378 581.8L364 573L350.5 563.4L337.7 553L325.5 542L313.8 530L303 517.6L292.9 504.5L283.7 491L275.1 476.5L267.5 462L257.1 437.5L249 412L243.4 386L240.3 359.5L239.6 341.5L240.1 323L241.9 304.5L244.8 286.5L242.6 266L241.2 245.5L240.6 225L240.7 205.5L242.4 177L245.8 151M493 608L476.5 605.9L460 602.6L443.5 598.3L427.5 593L412 586.8L396.5 579.4L381.5 571.1L367.5 562.1L354 552.2L341 541.3L329 530L317.4 517.5L306.5 504.3L296.6 490.5L287.5 476.1L279.6 461.5L273.6 449L268.3 436L263.7 423L259.7 409.5L256.5 396L254 382.5L252.2 369L251 355L250.6 338L251.2 321.5L252.9 305L255.6 288.5L254 269L253.2 250L253.1 231L253.8 212.5L256.8 180.5L259.2 165.5L262.2 151M493 597L476.5 594.7L460.5 591.4L444.5 587.1L429 581.8L413.7 575.5L399 568.3L384.5 560L371 551.1L358 541.3L345.4 530.5L333.7 519L322.5 506.6L312.5 494L303 480.3L294.4 466L286.9 451.5L281.3 439L276.3 426L272.1 413L268.7 400L265.8 386.5L263.7 373L262.3 359.5L261.7 346L261.7 332L262.5 318.5L264 305L266.3 290.5L265.4 272L265.3 253L265.8 234.5L267.1 216.5L269.1 199L272 182L275.5 166L279.8 151M493 587.9L477 585.7L461.5 582.4L446 578.2L430.5 572.8L415.5 566.4L401 559.2L387 551L373.7 542L361 532.1L349 521.5L337.5 510L327 497.9L317.1 485L308.1 471.5L300 457.5L292.9 443L287.6 430.5L283 417.6L279.1 404.5L276 391.5L273.6 378.5L271.9 365L270.9 351.5L270.6 338L271.9 315L275.2 292.5L274.8 273.5L275.2 255L276.3 236.5L278.2 219L281.2 200.5L285 182.9L289.7 166.5L295.2 151M493 578.9L477 576.5L461.5 573.2L446.5 568.9L431.5 563.5L416.6 557L402.5 549.7L389 541.6L376 532.5L363.5 522.5L352 511.9L341 500.5L330.6 488L321.4 475.5L312.9 462L305.2 448L298.5 433.5L293.7 421L289.4 408L286 395L283.3 382L281.4 369L280.1 355.5L279.6 342L279.9 328.5L281.3 311.5L284 294L284.3 272.5L285.6 251.5L289.9 220L294 200.6L299 182.9L305 166.3L312 151M493 564.3L477.5 561.9L462.5 558.4L447.5 553.9L433 548.5L418.9 542L405.1 534.5L392 526.1L379.5 516.9L367.5 506.6L356.5 495.9L346 484L336.7 472L328 459L320.3 445.5L313.5 431.5L307.6 417L302.4 400.5L298.4 384L295.7 367L294.3 350L294.1 336L294.8 322.5L296.2 309.5L298.2 297L299.2 280.5L301 264L303.6 247.5L307.1 231L311.5 215L316.5 200.1L322.1 186.5L328.5 173.5L335.5 161.7L343.1 151M493 549.7L477.5 547.1L462.5 543.4L448 538.7L433.5 532.9L419.5 526L406 518L393.5 509.4L381.3 499.5L370 488.9L359.4 477.5L349.9 465.5L341 452.5L333.2 439L326.5 425L320.7 410.5L316.2 396L312.5 380.5L310.1 365L308.8 349L308.7 333L310 315.5L314.5 283L317.3 267.5L321 252.4L326 236.2L331.8 221L338.5 206.6L346.1 193L354.5 180.5L363.4 169.5L373 159.6L383.2 151M493 535L477 532.1L461.5 528L446.1 522.5L431.5 515.9L417.5 508.1L404 499.1L391.3 489L379.6 478L368.7 466L359 453.3L350.4 440L342.6 425.5L336.2 410.5L331.1 395.5L327.2 380L324.6 364L323.2 346.5L323.4 329L325 313L328.5 292.5L332.6 276L337.9 260L344.4 244.5L352 229.8L360.9 215.5L370.5 202.8L381 191.1L392.5 180.5L404.5 171.4L417.5 163.3L431 156.6L445.6 151M493 520.4L477 517.2L461.5 512.8L446.5 506.9L432 499.8L418 491.2L405 481.6L393 470.9L381.8 459L371.9 446.5L363 432.8L355.4 418.5L349 403.5L344 388L340.5 372.3L338.3 356L337.6 340L338.3 324L340.4 308L343.2 296.5L347.6 283.5L353.7 269.5L361 256.2L369.5 243.6L379 231.8L390.5 219.8L403 208.7L417.5 197.6L432.5 187.8L447.5 179.5L462.6 172.5L477.7 167L493 162.9M493 505.7L478.5 502.7L464.5 498.5L450.9 493L437.5 486.2L425 478.4L413 469.4L402.1 459.5L392 448.6L383 437L374.9 424.5L368.1 411.5L362.4 398L358 384L354.7 369.5L352.8 355L352.1 340L352.5 328.5L353.7 317L355.2 308L357.3 302L362.1 291L368 280.4L374.8 270.5L382.5 261.3L396 248.3L413.5 235.1L468.5 198.1L481 190.9L493 185.2M493 491L480 488.1L467 483.9L455 478.9L443 472.7L432 465.6L421.4 457.5L411.5 448.4L402.4 438.5L394.4 428L387 416.5L381 404.9L375.9 392.5L371.8 379.5L368.9 366.5L367.2 353.5L366.6 340L367.3 325L369.5 310.5L373.5 302.6L378 295.3L383.1 288.5L388.8 282L398.5 273.3L410 265.3L421.5 259.1L445 248.2L455.5 241.9L463.5 235.6L482.3 218L493 209.2M493 476.2L481.5 473.4L470 469.6L459 464.8L448.5 459.1L438.5 452.5L429.1 445L420.5 436.9L412.5 428L405.4 418.5L399 408.2L393.6 397.5L389.1 386.5L385.6 375L383.1 363.5L381.6 352L381.1 340L381.8 326.5L383.7 313.5L390.3 304L398 295.8L409.5 287L423 280.1L436.5 275.9L461.5 270.7L470 267.1L474 263.9L478 259.4L493 237M493 461.4L483 458.8L473 455.2L463.5 450.8L454.1 445.5L445.5 439.6L437.4 433L430 425.9L423 417.9L416.8 409.5L411.3 400.5L406.5 391L402.7 381.5L399.7 371.5L397.4 361L396.1 350.5L395.6 340L396.2 328L397.9 316.5L405.2 308.5L414.5 301.4L421 297.8L428 294.9L435 292.8L442.5 291.4L455.5 290.6L478.5 292.3L484.5 291.8L487.2 290.5L489.4 288L493 278.4M493 446.5L484.5 444L476 440.7L468 436.8L460 432.1L452.5 426.7L445.5 420.8L439.2 414.5L433.3 407.5L427.9 400L423.2 392L419.3 384L416 375.5L413.5 367L411.6 358L410.5 349L410.1 340L410.6 329.5L412.2 319L422 311.6L433.5 306.2L440.5 304.3L447.5 303.1L454.5 302.7L462 303.1L477 305.9L493 311.8M493 431.5L478.7 426L465.5 418.3L453.6 408.5L443.5 397L435.4 384L429.5 370L425.8 355L424.6 340L425 331L426.3 322L433.5 317.7L442 314.4L454 312.1L467 312.2L480 314.7L493 319.5M493 416.3L481.5 411.1L471.2 404.5L462 396.4L454 386.8L447.6 376L442.9 364.5L440.1 352.5L439.1 340L439.6 331.5L440.7 324.5L449 321.4L459.5 319.4L470.5 319.2L481.5 320.7L493 324.1M493 400.7L484.5 396.1L476.9 390.5L470 383.7L464.2 376L459.8 368L456.4 359L454.3 349.5L453.6 340L454.3 330.5L454.8 327.5L455.5 327.1L464 325.3L473.5 324.7L483 325.5L493 327.6M493 384.3L487.5 380.5L482.6 376L478.4 371L474.8 365.5L471.9 359.5L469.8 353L468.5 346.5L468.1 340L468.7 332L469 330.5L469.7 330L481 329.2L493 330.5M493 365.9L488.5 360.1L485.3 354L483.3 347L482.6 340L483.3 333L493 333.1M433.9 606.7L435.5 595.3M391.4 589.1L396.9 579M362.5 571.9L370 563.2M322.3 538.7L329 529.3M286.7 495.3L295.1 487.5M268.2 463.3L279 459.2M256.9 436.9L268.2 434.7M245.1 394.1L255.5 390.2M239.9 349L250.9 349.2M242.1 303L253.6 302.9M241.2 244.4L253.6 245.2M241.3 195.6L255.1 197.4M485.2 607L486.2 596M434.1 595.2L439.1 584.9M393.1 577.5L398.9 568.2M349.6 548.5L358 540.7M320.2 520.5L329.2 514.2M296.2 490L306.6 484.9M269 437.8L279.8 435.4M255.4 390.3L266.4 390.2M250.8 346.8L261.8 347.1M253.4 301.7L264.3 303.4M253.3 250.9L265.7 251.9M254.9 200.3L269.1 203.5M475.7 594.5L476.2 585.1M444 586.9L445.2 577.5M396.4 566.8L400.8 558.4M347.7 532.5L354 526M320.1 503.6L327.9 499.1M300.7 476.5L307.4 470.4M284.5 446L292 441.1M270.5 406.9L278.9 403.5M263.4 370.3L272.7 368.1M263.3 311.4L272.3 311.4M265.9 281.7L274.9 282.2M265.5 243.9L276 244.8M267.6 212.3L279.6 212.5M276 164.3L289.8 166.5M486.7 587L486.9 578M436 574.7L437.6 565.3M401.3 559.3L407.3 551.9M363.5 534.1L370.3 527.4M325.4 495.8L332.5 489.6M301.4 459.8L309.3 455.6M286.3 426.8L295.2 423.5M272.8 372.2L281.6 370.2M271.9 315L281 317.8M274.8 276.3L284.3 277M277 230.9L288.4 231.1M287.7 173.4L302.1 175M477.1 576.5L480 561.8M426 561.1L429.9 547.1M381.7 536.5L391.3 525.6M345.9 505.6L354.6 493.3M324.9 480.2L337.6 473.2M307.5 452.1L321.6 447M292.4 417L307.1 414M283.3 381.9L297.4 376.9M280.1 326.3L295.1 325.8M284.2 282L299 283.9M288 233.9L306.5 234.2M301.6 175.8L322.9 184.3M452.9 555.6L455.4 540.8M410 537.2L418.9 525.1M365.4 504.6L374.8 492.9M340.2 476.5L351.5 466.6M313.2 430.8L325.8 422.6M300.2 391.6L314.1 387.2M294.2 334.8L309.2 334.9M297.1 304L311.6 307.6M303.2 250L321 252.9M311.1 216.2L330.4 224.6M328.1 174.2L352.1 184.1M474.5 546.4L476.1 531.4M419.5 525.9L426.9 513.5M375.4 494L384.5 482.7M343.9 456.7L355.6 448.2M329.9 432.1L343 426M315.8 394.6L330 389.6M308.8 344.5L323.7 343.3M310.9 309.1L325.3 310.6M318.3 263.6L334.8 269.4M331.1 223L352.2 230.8M343.5 197.6L365.9 208.7M381.8 152.2L397.4 176.6M457.6 526.6L462.7 513M416.1 507.1L421.9 493.3M376.6 474.8L386.4 463.4M353.1 444.2L364.3 435M330.9 394.7L344.6 388.5M324.6 364.4L339 362.1M323.4 332L337.8 330.2M327 301.2L341.1 306.4M340.6 253.5L357.9 261.3M365.4 209.6L384.4 225.8M388 184.6L405.2 207.3M421.5 161.4L432.9 188M472.5 516L477.1 502.2M436.6 502L441.4 487.8M402.4 479.3L411.6 467.4M382.1 459.3L393.5 449.6M359.2 425.7L373.1 420.1M341.9 378.5L356.3 377.3M338.9 319.5L353.7 321.8M354.1 268.8L371.2 275.8M382.1 228.6L396.8 247.5M417.8 197.4L430.5 224.1M442.1 182.5L456.2 206.7M477.5 167.1L487.1 188M486.9 504.4L488.4 490M439.3 487.1L446.7 474.6M393.2 449.9L404.8 441.3M368.8 412.9L381.4 405.7M354 364.4L369 364.7M354.9 309.9L369.3 311.7M369.1 278.9L383.4 288.9M409.9 237.8L425.9 257.6M449.6 210.8L462.3 236.3M478.5 192.3L493.2 209.3M463.3 482.4L470.3 469.7M423.8 459.4L432.3 447M392.9 425.7L406.4 419.2M376.2 393.3L389.3 387M366.7 337.4L381.7 338M387.6 283.4L397.6 296.5M432.5 253.9L442.5 275.2M471.6 228L488.9 243.1M460.1 465.3L468.1 452.6M413.4 429L423 417.4M386.5 378L399.9 372.5M381.6 329.5L396.1 330.4M397.2 296.6L408.6 306.4M441 274.9L444.3 291.6M476.3 456.4L481.9 443M444.5 438.8L453.2 427.2M413.9 404.7L426 396.7M399.2 369.2L413.4 366.4M397.2 321L411.3 324.2M416.3 300.4L421.8 312.2M464.1 291.2L461.6 303.5M448.9 423.6L458.4 412.7M417.3 378.9L430.9 373.9M410.2 338.7L425.2 338.5M430.8 307.5L433.6 318.1M476 305.7L474.7 313.6M473.3 422.8L479.3 410.2M434.7 382.4L447.9 376.4M425 332.5L439.9 331.3M460.8 312.2L462.1 319.6M474.2 406.4L481.3 393.8M447.7 376.2L460.6 368.5M439.7 347.8L454.1 345.8M466.8 319.2L467.6 325.2M470.9 384.6L483.2 376M454.4 330L468.8 331.8M470 330L483.4 333.4"/>
<path d="M75.2 450.8L76.7 450.8L78.3 450.9L79.9 451.4L81.5 452L83.1 452.8L84.6 453.8L86.1 454.9L87.4 456.2L88.6 457.7L89.8 459.4L90.9 461.2L91.9 463.3L92.8 465.5L93.8 467.7L94.6 470L95.5 472.4L96.3 474.9L97 477.5L97.6 480.2L98.2 483L98.8 485.9L99.4 488.7L100.1 491.4L100.9 494L101.8 496.5L102.8 499L103.8 501.4L104.9 503.8L105.9 506.1L107 508.4L108 510.7L109 512.9L109.9 515.1L110.9 517.2L111.9 519.3L112.8 521.3L113.6 523.3L114.4 525.2L115.1 527.1L115.7 529L116.2 530.8L116.6 532.6L117 534.3L117.3 535.9L117.4 537.6L117.5 539.2L117.3 540.8L117 542.5L116.5 544.2L115.7 545.9L114.8 547.6L113.8 549.2L112.6 550.9L111.4 552.6L110.2 554.3L109 556L107.7 557.7L106.4 559.3L104.9 560.9L103.4 562.6L102 564.2L100.6 565.9L99.3 567.7L98.2 569.5L97.2 571.4L96.3 573.4L95.5 575.5L94.7 577.5L94.1 579.6L93.6 581.7L93.1 583.7L92.8 585.7L92.8 587.7L93.2 589.7L93.9 591.8L94.5 593.9L95.1 595.8L95.3 597.5L95 598.9L94.1 600L92.3 600.8L89.6 601.3L86.4 601.7L82.9 601.8L79.4 601.7L76.1 601.3L73.3 600.8L71.2 600L69.9 598.9L69.2 597.4L68.9 595.6L68.9 593.7L69 591.6L69.1 589.6L69 587.5L68.5 585.7L67.8 584L66.9 582.4L66 580.8L65 579.2L63.9 577.6L62.7 575.9L61.6 574.1L60.4 572.2L59.2 570.1L57.8 567.9L56.4 565.5L55 563.1L53.6 560.6L52.2 558.2L50.8 555.7L49.6 553.3L48.4 551L47.3 548.6L46.1 546.3L45 544L44 541.7L43.1 539.3L42.2 536.9L41.5 534.4L40.9 531.8L40.3 529.1L39.8 526.3L39.4 523.5L39.1 520.7L38.9 518L38.8 515.4L38.8 512.9L38.9 510.6L39.2 508.5L39.6 506.6L40 504.6L40.6 502.7L41.3 500.8L42 498.8L42.8 496.7L43.7 494.5L44.8 492.2L45.9 489.8L47.1 487.4L48.4 485L49.7 482.6L51 480.2L52.3 477.8L53.6 475.4L54.9 472.8L56.2 470.2L57.5 467.7L58.9 465.2L60.3 462.9L61.7 460.7L63.1 458.9L64.5 457.3L66 455.8L67.5 454.5L69.1 453.3L70.6 452.4L72.1 451.6L73.7 451.1Z" fill="url(#stpd)"/>
<g clip-path="url(#t0)">
<path d="M493 602L79.7 601.5L75.8 600L74.5 597.5L73.3 585.5L65.5 566L56.6 534.5L53.7 520.5L52.8 510.5L53.3 503L55.2 494.5L65.7 465L70.4 455.5L72.8 452.5L75 451L117 450.6L493 450.5M493 602L81.8 601.5L80.4 600L79.9 598.5L78.2 585.5L74.9 571.5L74.2 566L73.6 544L67.2 515L66.1 503L67.2 491L70.8 475L73.3 460.5L75.9 451L120.5 450.6L493 450.5M493 602L83.9 601.5L84.8 600.5L85 599L83.1 586L82.3 571L83 566L87.2 549.5L88 542.5L86.7 534L80.9 513L78.7 501.5L78.1 492L79.3 475L79.1 463.5L78.5 455L76.8 451L124.5 450.6L493 450.5M493 602L86 601.5L89.5 600L90.1 598.5L87.9 585.5L88.6 577.5L89.7 571.5L91.8 566L96.7 557.5L101 548L102.2 544L102.6 539L100.1 527L92.8 506.5L90 496.5L89 490L87.7 474.5L85 461.5L82.3 455L80.1 452.5L77.7 451L127.5 450.6L493 450.5M489.6 602L489.6 601.5M470.8 602L470.7 601.5M451.6 601.9L451.5 601.4M436.6 601.9L436.5 601.4M408.3 601.9L408.3 601.4M381.2 601.9L381.3 601.4M360.9 601.8L360.8 601.3M341.2 601.8L341.2 601.3M317.8 601.8L317.9 601.3M303.1 601.8L303.1 601.3M288.6 601.7L288.6 601.7M260.2 601.7L260.2 601.7M241.3 601.7L241.3 601.7M219.3 601.7L219.3 601.7M190.3 601.6L190.3 601.6M160.7 601.6L160.7 601.6M139.1 601.6L139.1 601.6M121.8 601.5L121.8 601.5M103.1 601.5L103.1 601.5M75.3 599L80 597.6M67.9 571.9L75.1 570.1M62.6 555.7L74.4 551.7M55.5 529.2L69.8 526.6M52.8 509.8L66.7 508M57.2 488.8L67.6 490.5M62.9 473L71.2 476.4M77.5 451L77.5 451M107.4 450.7L107.5 451.2M124.7 450.6L124.6 451.1M148.8 450.6L148.8 451M165.9 450.5L165.9 451M193.9 450.5L193.9 451M208.7 450.5L208.8 451M224.4 450.5L224.4 451M250 450.5L249.9 451M269.1 450.5L269.1 451M297.5 450.5L297.5 451M325.4 450.5L325.3 451M350.8 450.5L350.8 451M366.9 450.5L366.9 451M392.1 450.5L392.1 451M421.1 450.5L421.1 451M442.2 450.5L442.2 451M457.5 450.5L457.4 451M475 450.5L475.1 451M473.8 602L473.7 601.5M451.5 601.9L451.5 601.4M429.4 601.9L429.4 601.4M401.9 601.9L402 601.4M377 601.8L376.9 601.4M354.6 601.8L354.6 601.3M325.4 601.8L325.3 601.3M308.6 601.8L308.7 601.3M282.1 601.7L282.1 601.7M265.5 601.7L265.5 601.7M241.8 601.7L241.8 601.7M224 601.7L224 601.7M203 601.6L203 601.6M176.6 601.6L176.6 601.6M150 601.6L150 601.6M123.4 601.5L123.4 601.5M105.6 601.5L105.6 601.5M83.8 601.5L83.8 601.5M78.3 586.7L83.3 587M74.2 563.8L84.1 563.8M73.2 541.9L88 539.5M70 527.7L84.8 525.4M66.3 504.5L78.8 501.2M69.8 479.4L78.8 479.9M74.3 456.7L79.2 457.8M98 450.8L98 450.8M114.9 450.6L114.9 451.1M131.3 450.6L131.3 451.1M145.6 450.6L145.6 451.1M167.5 450.6L167.6 451M188.5 450.6L188.6 451M209.5 450.5L209.4 451M227.7 450.5L227.7 451M254.5 450.5L254.5 451M269.7 450.5L269.7 451M298.2 450.5L298.3 451M321.3 450.5L321.3 451M344 450.5L344 451M370.7 450.5L370.7 451M388.5 450.5L388.4 451M404.8 450.5L404.8 451M423.8 450.5L423.8 451M438.5 450.5L438.4 451M457.5 450.5L457.5 451M481.4 450.5L481.5 451M479.7 602L479.7 601.5M464.8 601.9L464.7 601.5M445.3 601.9L445.4 601.4M420.2 601.9L420.1 601.4M392.3 601.9L392.4 601.4M368.9 601.8L368.9 601.3M340.7 601.8L340.6 601.3M319.3 601.8L319.3 601.3M299 601.8L299 601.3M271.5 601.7L271.5 601.7M251.4 601.7L251.4 601.7M224.9 601.7L224.9 601.7M207.5 601.6L207.5 601.6M187.9 601.6L187.9 601.6M171 601.6L171 601.6M148.2 601.6L148.2 601.6M131.6 601.6L131.6 601.6M114.3 601.5L114.3 601.5M96.9 601.5L96.9 601.5M84.2 593.4L89.6 592.7M82.5 574.5L88.9 575.5M86.1 553.8L97.4 555.9M84.1 524.6L96.8 518.5M78.6 500.3L90.7 497.1M79.3 472.6L87.3 472.7M78.5 455.3L82 453.5M92.2 450.9L92.2 450.9M107.4 450.7L107.3 451.2M132.5 450.6L132.5 451.1M152.3 450.6L152.3 451.1M170.7 450.6L170.7 451.1M184.9 450.6L185 451.1M201.9 450.6L202 451M220.1 450.5L220.2 451M240.3 450.5L240.3 451M269.1 450.5L269.1 451M294.6 450.5L294.5 451M312.9 450.5L312.8 451M332.6 450.5L332.7 451M349.1 450.5L349.1 451M378.1 450.5L378 451M397.8 450.5L397.9 451M424.1 450.5L424.1 451M449.7 450.5L449.6 451M478.2 450.5L478.1 451M492.5 450.5L492.4 451M481.8 602L481.8 601.5M466.3 601.9L466.3 601.4M445.5 601.9L445.5 601.4M425.2 601.9L425.2 601.4M410.2 601.9L410.3 601.4M390.1 601.9L390.2 601.4M370.9 601.8L370.8 601.3M348.9 601.8L349 601.3M330.4 601.8L330.3 601.3M313.9 601.8L313.8 601.3M293.5 601.7L293.5 601.7M271.9 601.7L271.9 601.7M255.2 601.7L255.2 601.7M230.5 601.7L230.5 601.7M212.7 601.6L212.7 601.6M197.2 601.6L197.2 601.6M177.7 601.6L177.7 601.6M157 601.6L157 601.6M140.6 601.6L140.6 601.6M117.3 601.5L117.3 601.5M92 601.5L92 601.5M88.2 587.3L93.2 586.9M93.5 563L100.5 566.8M100 550.2L109.5 555.7M100.8 530.6L115.5 527.5M94.7 511.8L106.8 507.2M90.3 497.4L101.4 494.8M87.9 477.1L96.8 475.7M85.2 462.5L91.1 461.2M85.3 450.9L85.3 450.9M108.7 450.7L108.7 451.2M130.2 450.6L130.2 451.1M149.4 450.6L149.3 451.1M167.5 450.6L167.5 451.1M181.8 450.6L181.8 451.1M201.4 450.6L201.4 451.1M229.7 450.6L229.6 451.1M252.7 450.5L252.6 451M270.9 450.5L270.8 451M295.6 450.5L295.7 451M312.6 450.5L312.6 451M334.1 450.5L334.1 451M357.9 450.5L357.9 451M387.2 450.5L387.2 451M407 450.5L407 451M430.2 450.5L430.2 451M459.3 450.5L459.3 451M485.6 450.5L485.7 451M487.2 602L487.2 602M470.3 602L470.3 602M448.1 601.9L448.1 601.9M432.1 601.9L432.1 601.9M417.1 601.9L417.1 601.9M402 601.9L402 601.9M386.3 601.9L386.3 601.9M361.1 601.8L361.1 601.8M345.2 601.8L345.2 601.8M324 601.8L324 601.8M297.7 601.8L297.7 601.8M276 601.7L276 602.2M259.4 601.7L259.5 602.2M231.5 601.7L231.5 602.2M203.6 601.6L203.6 602.1M188.7 601.6L188.8 602.1M170.7 601.6L170.7 602.1M148.6 601.6L148.5 602.1M121.8 601.5L121.7 602M101.5 601.5L101.6 602M76.3 600.2L75.8 601.6M72.3 583.1L67.6 584.8M63.6 559.2L54 562.1M58.4 540.7L44.5 542.8M54 521.9L39.3 524.9M54.8 496L44.8 491.6M63.9 470.1L57.5 467.2M79.8 450.9L79.8 450.4M102.9 450.7L102.9 450.7M123.6 450.6L123.6 450.6M148.9 450.6L148.9 450.6M172.9 450.5L172.9 450.5M200.2 450.5L200.2 450.5M227 450.5L227 450.5M243 450.5L243 450.5M263 450.5L263 450.5M287.7 450.5L287.7 450.5M305.4 450.5L305.4 450.5M322.4 450.5L322.4 450.5M336.6 450.5L336.6 450.5M360 450.5L360 450.5M389 450.5L389 450.5M418.6 450.5L418.6 450.5M434.7 450.5L434.7 450.5M459.7 450.5L459.7 450.5M480.4 450.5L480.4 450.5"/>
</g>
<path d="M75.2 450.8L76.7 450.8L78.3 450.9L79.9 451.4L81.5 452L83.1 452.8L84.6 453.8L86.1 454.9L87.4 456.2L88.6 457.7L89.8 459.4L90.9 461.2L91.9 463.3L92.8 465.5L93.8 467.7L94.6 470L95.5 472.4L96.3 474.9L97 477.5L97.6 480.2L98.2 483L98.8 485.9L99.4 488.7L100.1 491.4L100.9 494L101.8 496.5L102.8 499L103.8 501.4L104.9 503.8L105.9 506.1L107 508.4L108 510.7L109 512.9L109.9 515.1L110.9 517.2L111.9 519.3L112.8 521.3L113.6 523.3L114.4 525.2L115.1 527.1L115.7 529L116.2 530.8L116.6 532.6L117 534.3L117.3 535.9L117.4 537.6L117.5 539.2L117.3 540.8L117 542.5L116.5 544.2L115.7 545.9L114.8 547.6L113.8 549.2L112.6 550.9L111.4 552.6L110.2 554.3L109 556L107.7 557.7L106.4 559.3L104.9 560.9L103.4 562.6L102 564.2L100.6 565.9L99.3 567.7L98.2 569.5L97.2 571.4L96.3 573.4L95.5 575.5L94.7 577.5L94.1 579.6L93.6 581.7L93.1 583.7L92.8 585.7L92.8 587.7L93.2 589.7L93.9 591.8L94.5 593.9L95.1 595.8L95.3 597.5L95 598.9L94.1 600L92.3 600.8L89.6 601.3L86.4 601.7L82.9 601.8L79.4 601.7L76.1 601.3L73.3 600.8L71.2 600L69.9 598.9L69.2 597.4L68.9 595.6L68.9 593.7L69 591.6L69.1 589.6L69 587.5L68.5 585.7L67.8 584L66.9 582.4L66 580.8L65 579.2L63.9 577.6L62.7 575.9L61.6 574.1L60.4 572.2L59.2 570.1L57.8 567.9L56.4 565.5L55 563.1L53.6 560.6L52.2 558.2L50.8 555.7L49.6 553.3L48.4 551L47.3 548.6L46.1 546.3L45 544L44 541.7L43.1 539.3L42.2 536.9L41.5 534.4L40.9 531.8L40.3 529.1L39.8 526.3L39.4 523.5L39.1 520.7L38.9 518L38.8 515.4L38.8 512.9L38.9 510.6L39.2 508.5L39.6 506.6L40 504.6L40.6 502.7L41.3 500.8L42 498.8L42.8 496.7L43.7 494.5L44.8 492.2L45.9 489.8L47.1 487.4L48.4 485L49.7 482.6L51 480.2L52.3 477.8L53.6 475.4L54.9 472.8L56.2 470.2L57.5 467.7L58.9 465.2L60.3 462.9L61.7 460.7L63.1 458.9L64.5 457.3L66 455.8L67.5 454.5L69.1 453.3L70.6 452.4L72.1 451.6L73.7 451.1Z"/>
<path d="M216.6 419.5L218.3 419.2L220 419.2L221.7 419.5L223.4 419.9L225 420.4L226.5 421.1L227.9 421.8L229.2 422.6L230.2 423.6L231.1 425L231.7 426.5L232.3 428.1L232.9 429.6L233.6 430.9L234.4 431.8L235.5 432.1L236.8 431.8L238.2 430.9L239.8 429.7L241.5 428.2L243.2 426.6L244.9 425.1L246.6 423.7L248.2 422.6L249.8 421.7L251.3 420.9L252.8 420.1L254.3 419.4L255.8 418.8L257.4 418.3L259.1 418L260.8 417.9L262.7 418L264.7 418.2L266.8 418.5L268.9 419L271 419.6L273 420.4L274.9 421.4L276.6 422.6L278.1 424L279.4 425.6L280.6 427.4L281.8 429.4L282.8 431.5L283.9 433.7L285 436L286.1 438.4L287.2 440.9L288.3 443.6L289.4 446.4L290.4 449.2L291.5 452.2L292.7 455L294 457.8L295.5 460.5L297.2 463L299.1 465.5L301.2 467.9L303.4 470.2L305.6 472.5L307.6 474.8L309.6 477.2L311.3 479.5L312.9 481.9L314.3 484.2L315.7 486.6L317 488.9L318.2 491.3L319.2 493.7L320.1 496L320.8 498.4L321.3 500.7L321.7 503L321.9 505.2L322 507.5L321.9 509.8L321.7 512.2L321.3 514.7L320.8 517.4L320.1 520.3L319.2 523.4L318.1 526.7L316.8 530.1L315.5 533.4L314.1 536.7L312.7 539.8L311.3 542.7L309.8 545.4L308.2 547.9L306.5 550.3L304.8 552.5L303.1 554.8L301.5 557L300 559.3L298.7 561.6L297.6 564L296.5 566.3L295.6 568.7L294.8 571.1L294 573.4L293.4 575.8L292.8 578.2L292.4 580.6L292.4 583.1L292.8 585.9L293.6 588.7L294.4 591.5L294.9 594.1L294.9 596.5L294.2 598.5L292.4 600L289.3 601L284.8 601.6L279.6 601.9L273.8 601.8L268.1 601.6L262.6 601.2L258 600.6L254.5 600L252.2 599.2L250.9 598.2L250.1 597L249.8 595.6L249.6 594.1L249.5 592.7L249.1 591.3L248.2 590L246.9 588.8L245.5 587.7L244 586.6L242.4 585.5L240.8 584.3L239 583.2L237.3 581.9L235.5 580.6L233.6 579.2L231.5 577.9L229.2 576.5L227 575L224.8 573.5L222.8 571.8L221.1 570L219.7 567.9L218.7 565.6L218 563L217.5 560.3L217.2 557.4L217 554.5L216.9 551.5L216.8 548.6L216.6 545.8L216.5 543.1L216.7 540.4L216.9 537.7L217.2 534.9L217.4 532.2L217.4 529.5L217.2 526.6L216.6 523.7L215.6 520.7L214.3 517.6L212.7 514.4L210.9 511.2L209.1 508L207.2 504.8L205.5 501.6L204 498.4L202.6 495.2L201.2 492.1L199.8 488.9L198.5 485.8L197.2 482.7L196.1 479.5L195.2 476.4L194.5 473.2L194 470L193.6 466.7L193.5 463.4L193.4 460.2L193.5 456.9L193.7 453.8L194.1 450.8L194.5 447.9L195.1 445.2L195.8 442.5L196.6 439.9L197.6 437.5L198.6 435.1L199.8 432.9L201.1 430.9L202.4 429L203.9 427.3L205.5 425.7L207.3 424.2L209.2 422.9L211.1 421.7L213 420.8L214.9 420Z" fill="url(#stpd)"/>
<g clip-path="url(#t1)">
<path d="M255.6 616L255.6 598L250 583L242 568.4L231 555.6L209.2 533.5L189.4 512L182 502L178.2 493.5L176 482.5L176.7 473L182 458L183.4 448L185.7 440L189.2 433L194.3 427L201.2 422.5L209.7 419.5L251 419.1L262.5 417.7L493 417.5M257.4 616L257.4 598L252.4 583L245 568.1L235 555.2L216.3 534L195.8 509.5L190.5 501.5L186.7 492L185 483.5L184.9 476L186.7 467L189.6 458L191.5 445L193.9 437.5L196 433L198.7 429L202.2 425.5L207.5 422L214.1 419.5L252.5 419.1L263.5 417.7L493 417.5M259.2 616L259.2 598L254.7 583L248.2 568L238 553.4L203 507.5L198.2 499L195 490L193.6 482L193.6 473.5L194.8 466.5L197.1 458L198.9 445L200.9 437.5L202.8 433L205.1 429L209.3 424.5L213.6 421.5L218.4 419.5L253.5 419.1L259.3 418L264.5 417.7L493 417.5M261 616L261 598L257.1 583L251.4 568L241 551.1L210.2 505L206.3 497L203.4 487.5L202.1 479.5L202 473L206.5 442.5L208.5 435.5L210.3 431L212.8 427L216.6 423L222.6 419.5L254.5 419.1L256.8 419L259.6 418L265.5 417.7L493 417.5M262.8 616L262.8 598L259.4 583L254.6 568L232.2 526.5L217.6 502L213.9 493L211.6 484.5L210.5 476.5L210.3 470L213.5 442.5L215.3 435L217.6 429L219.8 425.5L223.1 422L226.9 419.5L256 419.1L257.9 419L259.9 418L267 417.7L493 417.5M264.5 616L264.5 598L261.8 583L257.8 568L238.5 523.9L225.4 499L221.7 489L219.4 479.5L218.4 470.5L218.4 463.5L220.9 440L223.8 429L226.3 424.5L229.7 420.5L231.1 419.5L257 419.1L258.9 419L260.2 418L270 417.7L493 417.5M266.3 616L266.3 598L264.1 583L261 568L246.1 523.5L235.9 501.5L231.3 490L228.9 482.5L226.8 473L225.8 460.5L226.6 448L228 437.5L230.5 427.5L234.7 420L235.3 419.5L259 419.1L260 419L260.5 418L272 417.7L493 417.5M268.1 616L268.1 598L265.6 577L264.2 568L254.6 526.5L251 514.5L238.1 483L235.1 473L233.6 465.5L233.1 453.5L234.7 435.5L236.5 427L239.5 419.5L259 419.1L261 419L260.8 418L274 417.6L493 417.5M269.9 616L269.9 598L268.5 579.5L261.2 520.5L257.4 507.5L243.5 473L241.5 466.5L240.3 460.5L240.1 451L241.1 435.5L243.7 419.5L260 419.2L262.1 419L261.1 418L274.5 417.7L493 417.5M271.6 616L271.5 594L269.5 552.5L269.6 526.5L269 517.5L267.5 509.5L264.6 500.5L250.6 470L247.5 460.5L246.9 451L248.3 422.5L247.8 419.5L261 419.2L263.1 419L261.4 418L275 417.7L493 417.5M273.4 616L273.8 557L274.9 543.5L277.3 523.5L277.2 512L275.6 504L272.7 495.5L257.9 468L254.8 460.5L253.8 452L253.5 424L252 419.5L264.2 419L261.7 418L275 417.7L493 417.5M275.2 616L275.4 594L277.5 561L279.7 547L285.6 520.5L286.3 514L286.1 507.5L284.2 499L281.1 491.5L273.8 479.5L265.4 467L261.9 460L260.7 453.5L259 425.5L258.3 422.5L256.1 419.5L265.2 419L262 418L275.5 417.7L493 417.5M277 616L277.1 595.5L280.8 564L284.2 549L294 519.5L295.4 512L295.5 505L293.9 497L290.4 489.5L283.6 479.5L272.4 465.5L268.4 458L264.7 426.5L263.2 422.5L260.1 419.5L266.3 419L262.3 418L275.5 417.7L493 417.5M278.7 616L278.8 597L280.8 581.5L283.7 566.5L288.7 550L302.8 517.5L304.9 509.5L305.2 502.5L303.6 495L299.6 487.5L293.5 479.5L280.5 465.5L275.6 458L272.6 438.5L270 426L268.2 422.5L264.2 419.5L267.3 419L262.6 418L493 417.5M280.5 616L280.5 598L283 582.8L286.5 568L289.6 559L293.1 551L308.2 523.5L312.2 515L314.6 507.5L315.1 500L313.3 493L308.8 485.5L301.8 477.5L288.8 465.5L282.9 458L277.2 431.5L274.3 424L271.9 421.5L268.2 419.5L268.4 419L262.9 418L493 417.5M282.3 616L282.3 598L285.3 583L289.7 568L293.5 559.1L297.8 551L315.7 523.5L321 514.5L324.5 505.5L325.2 498.5L323.3 491.5L318.2 484L311.4 477L296.5 464.9L290.3 458L283.1 431.5L281.5 427.5L279.4 424L276.6 421.5L272.3 419.5L263.2 418L493 417.5M284.1 616L284.1 598L287.7 583L292.9 568L297.5 559L302.5 551L324.4 522L330.7 512.5L334.5 504L335.1 500.5L335.1 496.5L334.3 493L332.5 489L327.1 482L321.7 477L304.5 464.4L297.9 458L288.9 431.5L287 427.5L284.5 424L281.2 421.5L276.3 419.5L263.5 418L493 417.5M285.9 616L285.9 598L290 583.1L296.1 568L301.1 559.5L307 551.2L332.4 521.5L339.3 512.5L344.1 503.5L345.1 499.5L345.2 496L344.4 492L342.8 488.5L340 484.5L336.2 480.5L329.3 475L311.5 463.3L305.6 458L302.9 452.5L298.9 441L294.7 431.5L292.5 427.5L289.6 424L285.8 421.5L280.2 419.5L273 419.2L263.8 418L493 417.5M255.6 598.7L257.6 599.1M246.1 575.9L248.3 574.7M234.7 559.9L237.7 558M219.5 544L223.1 541.2M199.8 523.2L203.7 518.7M177.7 490.7L185.9 487.1M178.2 468.7L186.1 469.9M189 433.4L195.1 435.6M212.8 419.5L212.8 420M239.9 419.2L239.9 419.7M275.5 417.7L275.5 418.2M302.3 417.7L302.3 418.2M321.5 417.7L321.5 418.2M351.6 417.6L351.7 418.1M384.1 417.6L384.1 418.1M415.8 417.6L415.7 418.1M439.9 417.6L440 418.1M478.5 417.5L478.5 418M254.1 588.2L256.4 587.2M237.6 558.5L240.5 556.6M220.1 538.3L224.3 535.6M197.1 511L202.5 506.6M184.9 477.8L193.4 478.4M191.9 443.7L198.8 445M219.1 419.4L219.1 419.4M239.3 419.2L239.3 419.7M278.1 417.7L278.2 418.2M305 417.7L305.1 418.2M338.5 417.7L338.5 418.2M362 417.6L362 418.1M400 417.6L400.1 418.1M418.5 417.6L418.5 418.1M449.2 417.5L449.2 418M472.2 417.5L472.2 418M259.2 613.7L261.2 613.6M257.6 592.8L260.1 592.3M248.5 568.8L250.9 567M232.6 546.4L236 543.4M221.6 531.9L226.3 529.1M204 508.8L210.9 505.9M194 484.1L202.3 482.4M196.7 459.5L204.1 460.5M204 430.8L209.6 433.2M238.6 419.3L238.6 419.3M261 417.9L261 417.9M298.4 417.7L298.4 418.2M323.5 417.7L323.5 418.2M358.1 417.6L358 418.1M378.4 417.6L378.5 418.1M418.2 417.6L418.1 418.1M445.6 417.6L445.6 418M484.8 417.5L484.7 418M261 599.9L262.9 600.3M252.4 570.8L255.5 569.1M242.2 553.1L246 550.7M222 522.7L228.6 520.1M205.4 494.2L214.2 492.1M203 466.7L210.5 466.9M208.8 434.6L214.8 437.1M228.7 419.4L228.7 419.4M255.2 419.1L255.2 419.6M278.1 417.7L278 418.2M309.3 417.7L309.4 418.2M339.9 417.6L339.8 418.1M369.2 417.6L369.2 418.1M387.9 417.6L388 418.1M419.7 417.6L419.7 418.1M447.6 417.5L447.5 418M478.6 417.5L478.5 418M260.4 587.3L262.8 586.8M250.3 560L254.1 557.7M231.3 525L237.9 522.5M221.4 508.3L228.8 505.4M210.4 473.3L218.9 473.7M214.2 439.9L221 441.3M225.7 420.3L227.3 422.8M261 418L261 418M289 417.7L289 418.2M318.8 417.7L318.8 418.2M355.8 417.6L355.9 418.1M378.1 417.6L378.2 418.1M402.3 417.6L402.3 418.1M434.4 417.6L434.4 418.1M454 417.5L454 418M484.3 417.5L484.3 418M264.5 607.5L266.5 607.3M258.7 571.4L262.1 570.7M246.5 542.3L251.8 540.7M230.2 508.2L236.8 503.6M222.2 490.4L230.3 486.3M219.7 451.1L226.6 452.2M223.8 429L229.5 430.9M250.8 419.2L250.9 419.7M287.7 417.7L287.8 418.1M321.7 417.6L321.6 418.1M344.1 417.6L344 418.1M376.8 417.6L376.8 418.1M404.2 417.6L404.3 418.1M422.6 417.6L422.5 418.1M448.1 417.5L448 418M473 417.5L472.9 418M266.3 608L268.3 608.2M263.7 581.2L266.7 580.9M258.5 560.6L262.3 559.4M248.4 530.4L255.4 529.8M237.7 505.3L245.6 501.2M226.7 471.1L235.1 470.3M227.1 444.2L234 445.3M236.9 419.5L239.1 421.2M265.4 417.9L265.4 417.9M304.1 417.6L304.1 418.1M329.8 417.6L329.8 418.1M363.2 417.6L363.2 418.1M386.4 417.6L386.3 418.1M417.1 417.6L417.2 418.1M441.4 417.5L441.4 418M478.6 417.5L478.6 418M268.1 606.4L270.1 606.3M266.6 585.6L269.6 585.7M259.7 548.5L264.7 548.6M254.4 525.6L261.8 522.6M245 500L253.5 497M236.1 476.2L244.1 473.5M234.3 440.5L240.8 440.6M254.5 419.2L254.5 419.7M284.2 417.6L284.2 418.1M314.2 417.6L314.2 418.1M334.4 417.6L334.4 418.1M372.1 417.6L372 418.1M392.1 417.6L392 418.1M418.1 417.6L418 418M444.3 417.5L444.3 418M478.2 417.5L478.1 418M269.5 593.4L272 593.5M265.3 553.7L270.2 552.8M262.9 534.3L269.4 534.9M257.2 506.9L265.9 504.6M247.1 482L255.3 479.6M240.1 450.7L247.1 449.8M242.3 428L247.8 428.7M272.5 417.7L272.5 418.2M295.1 417.6L295 418.1M321.2 417.6L321.1 418.1M342.3 417.6L342.3 418.1M369 417.6L369.1 418.1M403.3 417.6L403.4 418.1M423.2 417.6L423.2 418.1M444.9 417.5L444.8 418M477.1 417.5L477.2 418M271.6 605.3L273.6 605.6M270.7 576.2L274.1 575.6M269.6 555.5L274.1 556.3M269.5 525L277.5 525.4M265.9 504.6L274.8 501.3M258.1 486.2L265.8 482.7M247.4 459.1L254.4 458.8M247.7 434.6L254.1 435.9M264 417.9L264 417.9M287.4 417.6L287.5 418.1M314.5 417.6L314.6 418.1M333.7 417.6L333.7 418.1M356.5 417.6L356.5 418.1M384.5 417.6L384.4 418.1M414.7 417.6L414.8 418.1M442.8 417.5L442.8 418M479.6 417.5L479.7 418M273.5 609.9L275.5 609.9M273.7 570.6L277.2 571.3M275.5 538.5L281.4 539.3M275 502.3L284.3 498.5M267 485.1L275.2 481.2M254.9 460.8L261.4 458.2M253.7 441.2L260.6 440.6M253.8 419.4L256.5 419.6M269.1 417.8L269.1 417.8M307.3 417.6L307.3 418.1M332.5 417.6L332.5 418.1M361.3 417.6L361.3 418.1M393.7 417.6L393.7 418.1M431.2 417.6L431.1 418.1M470 417.5L470.1 418M275.3 599.8L276.8 599.8M276.7 573L279.7 573.2M279.2 550.3L284.1 551M283.4 530.6L290 532.9M285.5 504.7L295.4 503.6M275.4 482.1L282 476.8M261.4 457.4L268.3 456.2M259.6 434.4L266.1 433.9M268.2 417.8L268.2 417.8M296.9 417.7L297 418.1M315.1 417.6L315.2 418.1M342 417.6L342.1 418.1M381.3 417.6L381.3 418.1M399.4 417.6L399.4 418.1M430.5 417.6L430.5 418.1M469.6 417.5L469.6 418M277 608.3L279 608.4M279.4 575.5L281.9 575.4M282.6 555.9L286.7 557.8M294.2 518L302 521.4M286.6 484L293.5 479M271.5 463.8L276.4 459.5M266.2 439.7L273.2 439.4M266.2 417.9L266.2 417.9M301.5 417.7L301.5 418.2M333.7 417.6L333.6 418.1M352.9 417.6L352.8 418.1M387.7 417.6L387.8 418.1M406.8 417.6L406.7 418.1M438.5 417.6L438.5 418.1M468.6 417.5L468.6 418M278.8 604.2L280.8 604.2M281.7 576.8L284.7 577.5M286.6 556.9L289.8 558.5M295.8 533.6L301.5 535.5M305 501.2L315.4 502.1M296.7 483.7L302.8 478.5M283.2 468.3L286.8 463.5M271.8 434.8L278.2 433.3M269.3 418L269.3 418M299.4 417.9L299.4 417.9M319.9 417.9L319.9 417.9M340.5 417.8L340.5 417.8M365.3 417.8L365.3 417.8M404.3 417.7L404.3 418.2M434.6 417.6L434.6 418.1M472.9 417.6L473 418.1M280.5 610.3L282.5 610.1M283.8 579.7L286.7 580.1M290 558.1L293.5 560M301.6 535.4L305.8 538.1M311.6 516.2L319.1 519.1M312.5 491.5L319.5 485.1M292 468.5L296.6 464.6M279.7 442.8L286 441.2M268.8 419.8L269.3 418.9M286.7 417.9L286.7 417.9M323.3 417.9L323.3 417.9M349.2 417.8L349.2 417.8M380 417.8L380 417.8M408.6 417.7L408.5 418.2M448.1 417.6L448.2 418.1M473.4 417.6L473.4 418.1M282.3 598.6L284.3 598.6M286.5 578.8L288.9 579.7M295.3 555.8L299 557.1M314.9 524.8L319.4 528.8M323.5 508.2L331.1 511.9M313.2 478.9L318.5 474.3M290.7 458.4L297.4 456.5M282.3 429.6L287.5 427.7M264.5 418L264.5 418M285.9 418L285.9 418M324.8 417.9L324.8 417.9M359.6 417.8L359.6 417.8M395.3 417.7L395.3 418.2M415.5 417.7L415.4 418.2M450.7 417.6L450.8 418.1M473.5 417.6L473.6 418.1M284.1 606.1L286.1 606.2M287.7 582.9L289.9 584.1M296.8 560.3L299.7 562.4M310.1 540.9L313.9 543.4M322.7 524.2L328 527.1M335.1 498.9L345.1 502M323.6 478.8L327.5 473M304.2 464.2L308.6 460.1M293 443.5L298.9 440.9M277.9 420.1L278 419.2M286.2 418L286.2 418M307.7 417.9L307.7 417.9M344.6 417.8L344.6 417.8M381.4 417.8L381.4 417.8M412.8 417.7L412.8 418.2M442.8 417.6L442.8 418.1M476.9 417.6L477 418"/>
</g>
<path d="M216.6 419.5L218.3 419.2L220 419.2L221.7 419.5L223.4 419.9L225 420.4L226.5 421.1L227.9 421.8L229.2 422.6L230.2 423.6L231.1 425L231.7 426.5L232.3 428.1L232.9 429.6L233.6 430.9L234.4 431.8L235.5 432.1L236.8 431.8L238.2 430.9L239.8 429.7L241.5 428.2L243.2 426.6L244.9 425.1L246.6 423.7L248.2 422.6L249.8 421.7L251.3 420.9L252.8 420.1L254.3 419.4L255.8 418.8L257.4 418.3L259.1 418L260.8 417.9L262.7 418L264.7 418.2L266.8 418.5L268.9 419L271 419.6L273 420.4L274.9 421.4L276.6 422.6L278.1 424L279.4 425.6L280.6 427.4L281.8 429.4L282.8 431.5L283.9 433.7L285 436L286.1 438.4L287.2 440.9L288.3 443.6L289.4 446.4L290.4 449.2L291.5 452.2L292.7 455L294 457.8L295.5 460.5L297.2 463L299.1 465.5L301.2 467.9L303.4 470.2L305.6 472.5L307.6 474.8L309.6 477.2L311.3 479.5L312.9 481.9L314.3 484.2L315.7 486.6L317 488.9L318.2 491.3L319.2 493.7L320.1 496L320.8 498.4L321.3 500.7L321.7 503L321.9 505.2L322 507.5L321.9 509.8L321.7 512.2L321.3 514.7L320.8 517.4L320.1 520.3L319.2 523.4L318.1 526.7L316.8 530.1L315.5 533.4L314.1 536.7L312.7 539.8L311.3 542.7L309.8 545.4L308.2 547.9L306.5 550.3L304.8 552.5L303.1 554.8L301.5 557L300 559.3L298.7 561.6L297.6 564L296.5 566.3L295.6 568.7L294.8 571.1L294 573.4L293.4 575.8L292.8 578.2L292.4 580.6L292.4 583.1L292.8 585.9L293.6 588.7L294.4 591.5L294.9 594.1L294.9 596.5L294.2 598.5L292.4 600L289.3 601L284.8 601.6L279.6 601.9L273.8 601.8L268.1 601.6L262.6 601.2L258 600.6L254.5 600L252.2 599.2L250.9 598.2L250.1 597L249.8 595.6L249.6 594.1L249.5 592.7L249.1 591.3L248.2 590L246.9 588.8L245.5 587.7L244 586.6L242.4 585.5L240.8 584.3L239 583.2L237.3 581.9L235.5 580.6L233.6 579.2L231.5 577.9L229.2 576.5L227 575L224.8 573.5L222.8 571.8L221.1 570L219.7 567.9L218.7 565.6L218 563L217.5 560.3L217.2 557.4L217 554.5L216.9 551.5L216.8 548.6L216.6 545.8L216.5 543.1L216.7 540.4L216.9 537.7L217.2 534.9L217.4 532.2L217.4 529.5L217.2 526.6L216.6 523.7L215.6 520.7L214.3 517.6L212.7 514.4L210.9 511.2L209.1 508L207.2 504.8L205.5 501.6L204 498.4L202.6 495.2L201.2 492.1L199.8 488.9L198.5 485.8L197.2 482.7L196.1 479.5L195.2 476.4L194.5 473.2L194 470L193.6 466.7L193.5 463.4L193.4 460.2L193.5 456.9L193.7 453.8L194.1 450.8L194.5 447.9L195.1 445.2L195.8 442.5L196.6 439.9L197.6 437.5L198.6 435.1L199.8 432.9L201.1 430.9L202.4 429L203.9 427.3L205.5 425.7L207.3 424.2L209.2 422.9L211.1 421.7L213 420.8L214.9 420Z"/>
<path d="M358.8 386.7L358.7 382.5L358.8 378.6L359.2 375.1L359.8 371.7L360.6 368.5L361.4 365.4L362.4 362.2L363.4 359L364.5 355.7L365.7 352.3L367 349L368.4 345.8L369.9 342.6L371.5 339.5L373.2 336.5L374.9 333.7L376.7 331L378.5 328.3L380.4 325.8L382.4 323.3L384.4 321.1L386.5 318.9L388.7 317L391 315.3L393.4 313.8L395.8 312.6L398.4 311.6L401.1 310.7L403.7 310L406.4 309.4L409.1 308.9L411.7 308.4L414.3 308L417 307.8L419.7 307.7L422.4 307.7L425 307.8L427.6 307.9L430.1 308.1L432.5 308.4L434.8 308.7L437 309.1L439.1 309.6L441.1 310.1L443.1 310.7L445 311.4L446.8 312.2L448.6 313L450.3 313.9L451.9 314.9L453.4 315.9L454.9 317L456.3 318.2L457.6 319.5L458.8 320.8L460 322.2L461.1 323.9L462 326.1L462.8 328.4L463.5 330.8L464.3 333L465.1 334.7L466 335.8L467 336L468.2 335.3L469.4 333.7L470.7 331.6L472 329L473.4 326.1L474.9 323.2L476.4 320.5L478 318L479.8 315.6L481.8 313.1L483.9 310.5L486.1 307.9L488.2 305.4L490.1 303.2L491.7 301.4L493 300L493.9 297.1L494.5 291.7L494.8 285.5L494.9 280.1L495 277.2L494.9 278.5L494.9 285.5L495 300L495.6 325.2L496.8 360.9L498.3 403.7L499.6 450L500.3 496.3L500 539.1L498.4 574.8L495 600L489.2 614.5L481.2 621.7L471.6 623L461.2 620.2L450.5 614.9L440.3 608.7L431.3 603.2L424 600L418.3 598.1L413.5 595.6L409.5 592.6L406.1 589.3L403.2 585.8L400.8 582.4L398.8 579L397 576L395.7 573.3L395.2 570.8L395.3 568.3L395.7 565.9L396.3 563.4L396.8 560.8L397.1 558L397 555L396.5 551.7L395.9 548.2L395.2 544.5L394.4 540.8L393.5 536.9L392.6 532.9L391.8 529L391 525L390.2 521L389.5 516.8L388.8 512.6L388 508.3L387.2 504.1L386.5 499.9L385.8 495.9L385 492L384.3 488.4L383.6 485L383 481.8L382.3 478.6L381.6 475.4L380.9 472.2L380 468.7L379 465L377.9 461.1L376.6 457L375.2 452.8L373.7 448.5L372.2 444.1L370.7 439.5L369.3 434.8L368 430L366.7 424.9L365.2 419.4L363.8 413.7L362.4 407.9L361.2 402.2L360.1 396.6L359.3 391.4Z" fill="url(#stpd)"/>
<g clip-path="url(#t2)">
<path clip-path="url(#t2c0)" d="M429.1 436.5L430.9 435.5L431.7 433L431.3 427L432.2 411.5L431.6 407L430.3 403.5L427 399.8L422.5 398L415.5 397.6L409.5 399.2L406.5 401.5L404 404.8L401.7 409L400 413.5L398.8 421.5L399.6 435L400.7 436L402.9 436.5L413 436.3L415 436.9L416 436.3L417 436.8L418.5 436.4L429.1 436.5M432.6 437L436.2 436L437.4 434.5L438 432L437.4 423L438.7 402L438 396.2L436.5 391.5L434.7 388.5L432.5 386.2L429.5 384.2L426 383L416.5 382.2L411.5 382.9L407.5 384.2L403.5 387L400 391.1L396.5 397.1L393.8 404L392 415.5L392.9 426L392.7 434L394.6 436L398.5 436.7L413 436.5L415 437.2L416 436.4L417 437.2L419 436.7L432.6 437M418.1 437.5L421.5 436.8L438 437.1L441.9 436L443.4 434.5L444.3 431L443.5 419.5L445.2 394.5L444.8 388L443.7 382.5L441.7 377.5L439 373.7L435.5 370.7L431 368.5L426 367.3L419.5 366.7L412.5 367.3L405.5 369.2L401 372L397 376.2L392 383.9L388.2 392.5L386 401L385.1 410.5L386.3 424.5L385.7 432L387 435L388.5 436L393.3 437L411 436.7L414.5 437.6L416 436.5L417 437.5L418.1 437.5M442.5 437.5L445.3 437L448.2 435.5L449.8 433.5L450.6 430L449.7 415.5L451.6 382L450.5 373L447.9 365.5L445 360.8L441.5 357.4L436.5 354.3L431 352.5L424 351.5L416.5 351.4L408.5 352.7L402.5 354.7L396.5 358.8L390.5 366L385 375.5L381 386L379.1 395L378.2 404L379.7 420.5L379 429.5L379.4 433L380.3 434.5L382.3 436L388.5 437.2L410.5 436.8L414 437.9L415.5 437.5L416 436.7L416.5 437.4L418 437.9L421.5 436.9L432 437.5L442.5 437.5M444.3 438L449 437.5L453.4 436L455.5 434L456.9 429L455.8 412L458.1 372.5L456.9 362.5L454.1 353.5L451 348.1L446.5 343.4L441.3 340L434.5 337.5L426 336.2L417 336L408 337.3L400.5 339.7L396.5 341.9L393 344.7L386.1 353L379.5 364.3L374.8 376.5L372.4 387.5L371.4 398L371.7 406L373.1 417.5L372.3 428L372.8 432.5L374 434.5L376.2 436L383.8 437.5L410.5 436.9L414 438.3L415.5 437.6L416 436.8L416.5 437.6L418 438.3L421.5 436.9L444.3 438M419.5 438.5L421.5 437.4L424 437.2L443 438.3L452.4 438L459.2 436L461.6 433.5L462.7 431L463.2 427.5L461.9 408L464.6 367L464.1 356.5L462.2 347L459 338.9L454.5 332.3L448.5 327.1L441.5 323.7L433 321.5L422 320.5L410 321.5L403 323.1L398 324.9L391.5 328.9L384.2 336.5L376.1 349L369.9 363L366.1 377.5L364.5 393L364.8 401.5L366.5 414.5L365.6 429.5L366.2 432L367.9 434.5L371.7 436.5L378 437.6L387 437.9L410 437.2L413.5 438.6L415 438.2L416 436.9L417.5 438.4L419.5 438.5M431.5 433.8L436.2 436.3M427.5 400.4L436.1 390.1M402.9 406.9L394.3 400.8M398.9 423.6L392.6 424.9M421.4 436.4L421.3 436.9M437.8 428.8L444.3 428.3M438.1 411.5L444.6 410.8M437.6 395L445.5 394.1M416.3 382.2L412.4 367.2M393.5 406L385.6 404.4M393.7 435.1L392.9 436.8M425.6 436.8L425.6 437.3M432.1 437L432.2 438M443.7 422.4L450.7 422.1M445 396.7L450.9 398.1M442.5 379.5L451.4 379M421.9 366.9L426.1 351.5M397.4 375.8L389.4 367.5M385.3 408.5L377.9 407.3M387.3 435.2L385.9 437.2M405.6 436.8L405.8 437.3M450.4 427L456.8 428M450.7 397.4L457.2 396.5M449.2 369.4L457.4 365.7M429 352.2L434.3 337.1M396.2 359.1L387.5 350.2M386.1 373.6L377.1 369.4M378.7 398.8L370.8 397.9M379.9 433.7L376.5 436.5M395.4 437.1L395.3 438.1M413.5 437.8L413.5 438.3M455.9 432.6L460.9 434.7M456.7 397.3L463 398.7M457.2 364.7L465 362.9M446.7 343.5L454.9 332.3M425.6 336.2L425.1 320.7M403 338.9L397.4 325M390 348.3L381.4 339.9M375.1 375.6L366.3 374M371.5 396.5L364.5 397.2M372.6 424.1L365.7 422.8M389.2 437.4L389.2 437.9M411.8 437.4L411.2 438.3M439.6 437.8L439.7 438.3M425.4 437.3L425.4 437.3M446 438.2L445.9 439.2M463 428.6L468.5 429.1M462 406.1L467.5 405.6M464.1 375.6L469.5 376.6M462 346.4L469.4 345.6M441.5 323.7L445.3 311.2M415.1 321.1L415.4 307.6M398 324.9L391.9 314.6M377.1 347.5L369.2 344.2M368.9 366.6L361.3 364.3M365.1 386.6L358.7 385.5M366 410.8L360.6 411.5M378.7 437.6L378.5 438.6M402.1 437.4L402.1 437.4"/>
<path clip-path="url(#t2c1)" d="M424.8 616L424.8 598L419.5 590.7L413.5 584L397.5 568.5L380 554.2L366 543.9L341.7 528L333.8 522L327 515L322.9 507.5L321.7 502.5L321.5 497.5L322.4 491.5L324.2 485.5L328.9 474.5L351.8 428L350.3 417L347.8 407L344.9 399L337.6 382.5L335.5 375L335.2 367L336.8 356L339 349L342 342.5L345.7 336.5L351.9 328.5L361.9 319L367.1 315.5L373.7 312.5L382.9 310L396.7 308L485.2 307.5L493 299.2M427.7 616L427.7 598L418.5 585.4L403.5 569.4L385 552.4L371.5 541.1L351.2 526L344 520L337.5 512.5L334 505L333 500L333 494.5L333.9 489L335.7 483L340.8 471L361.4 428L360.5 416L358.8 405.5L349.4 375L348.7 365.5L350 352.5L351.9 346L354.8 339.5L361.9 328.5L370.9 319L375.8 315.5L381.9 312.5L390.6 310L403.6 308L486 307.5L493 299.7M430.5 616L430.5 598L423.5 587.2L410 571L388.5 548.5L377 537.4L360.2 523L354 517L348.8 510L345.6 502.5L344.8 497.5L344.8 492.5L345.6 487L347.4 480.5L358.4 454.5L370.7 428L370.6 415.5L369.6 404.5L362.7 371.5L362.4 359L363.4 349L365.1 342.5L367.5 336.5L374 326L378.2 321L382.6 317L390.4 312.5L398.5 310L410.7 308L486.7 307.5L493 300.1M433.3 616L433.3 598L428.5 589.4L417 573.6L389.5 540.2L364.9 514L360.2 506.5L357.6 499L356.9 494L357.1 489L359.7 477L369.4 451.5L380 428L380.1 403.5L376 368.5L375.7 355.5L376.7 345.5L378.1 339.5L380.1 334L386.1 323.5L389.8 319L393.8 315.5L401.5 311.5L408.8 309.5L417.8 308L487.4 307.5L493 300.3M436.2 616L436.2 598L432.3 590L425.5 579.2L408.7 555.5L393 531.7L376.6 511L372.3 503L370 495L369.5 490L369.8 484.5L372.5 471.5L380.3 449L389.2 428L390.4 403.5L388.9 355.5L389.9 341.5L392.8 331L397.8 321.5L403.2 315.5L410.2 311.5L416.8 309.5L425.1 308L488.2 307.5L493 300.5M439 616L439 598L436.5 592L431 581.5L414.5 554L402.9 530L388.4 507L384.7 498.5L382.8 490L382.8 479.5L385.2 466.5L390.8 447.5L398.3 428L400.7 399L401.9 349L403.1 336.5L406.1 326L409.9 319L414.7 314L420.3 311L432.4 308L488.9 307.5L493 300.9M441.8 616L441.8 598L441 595.5L437 585.7L425.8 564L420.9 553L417.5 543.5L413.5 530L399.3 498.5L397.1 491.5L396 484.5L396 473L398.1 459L401.9 444L407.6 428L413.8 366.5L414.7 342.5L415.7 333.5L417.5 325.5L420.6 318.5L424.3 314L430.3 310.5L439.8 308L489.6 307.5L493 301.3M444.7 616L444.7 598L441.7 588.5L432.2 566L428 554L425.7 544L423.3 527.5L419.9 515.5L411.4 490L409.7 482.5L408.9 475L409 466L410.1 454.5L412.7 442L416.9 428L418.5 413.5L425.6 364.5L428.2 328.5L430 321L432.8 315.5L435.7 312.5L440.2 310L447.2 308L490.4 307.5L493 301.8M447.5 616L447.5 598L445.6 590L438.1 568L435.2 556.5L433.7 545.5L433.8 530L432.3 515L430.3 505L424.6 484L422.5 473.5L421.5 459L422.6 445L426.4 428L428.8 407.5L436.9 363L438.3 351L440 326L441.1 320L442.9 315.5L444.7 313L447.1 311L454.7 308L491.1 307.5L493 302.6M450.3 616L450.3 598L448.6 588.5L443.3 568L441.4 554L441.5 543L443.4 530L444 520.5L443.7 504.5L441.9 493.5L435.5 468L433.7 454.5L433.9 442L436.1 428L437.4 413.5L440.3 396.5L448.3 359.5L449.9 346.5L451.4 323L452.4 317L453.6 314L456.8 310.5L462.2 308L491.5 307.5L493 303.7M453.2 616L453.2 598L452.3 590L448.4 568L448 555.5L449.3 543L452.7 530L455.4 516L456.4 507.5L456.5 500L454.8 486.5L447.7 460.5L445.7 449L445.3 437.5L447.1 412.5L450.3 394.5L459.6 354.5L461.2 341L462.4 319L463.6 313.5L466.2 310L469.7 308L491.5 307.7L492.5 307.5L493 305.5M456 616L455.6 590L453.6 568L454.2 557.5L457 543.5L463.3 525.5L467.1 512.5L468.8 503.5L469.5 495L469.1 487.5L467.6 479.5L459.6 454L457.2 443L456.5 435L456.4 423L457.2 410.5L460.6 391.5L468 363L470.5 350.5L472 338L472.7 317L473.5 312.5L474.8 310L477.1 308L493 307.6M458.8 616L458.7 568.5L459.9 560.5L461.7 552.5L464.3 544.5L474.1 522L478.6 510L481.3 500L482.4 491L482 482.5L480.4 474L471.1 447.5L468.3 436.5L466.9 421.5L467.5 408L470.3 391.5L478.3 360.5L481.1 347L482.5 333.5L482.5 315L483 311L484.5 308L493 307.8M493 469L480.3 435.5L478.2 425.5L477.5 414.5L478.1 404L479.9 392.5L488.7 357.5L491.4 343.5L492.6 328.5L491.6 309.5L491.8 308L493 308M461.7 616L461.7 598L463.6 570.5L465.1 563L470.7 547L486.8 515.5L490.4 507L493 499.1M493 435.5L489.6 424.5L488.3 410L489.5 395.5L493 378.1M464.5 616L464.5 598L469.1 568L472.8 558L477.5 548.1L493 522M467.3 616L467.3 598L471.1 580L474.3 568L482 552.8L493 535.5M470.2 616L470.2 598L476 577.6L480 567.1L493 546.8M424.8 603.1L427.8 603.3M414.4 584.9L416.9 583.3M380.4 554.6L383.9 551M360.9 540.6L365.6 536M339.5 526.3L344.4 520M323.2 488.7L334 490.7M342.9 446.2L351.5 448.8M346.3 402.8L356.8 398.2M335.6 375.3L349.6 375.2M348.8 332.5L356.9 336.3M366.1 316.2L369.9 320.1M404.8 308L404.8 308M451.3 307.7L451.4 308.2M476.7 307.5L476.8 308M427.7 612.9L430.7 613M415.6 582.3L418 579.8M390.7 557.6L394.5 554.4M363 534.7L369 529.5M334.4 505.8L345.8 502.3M340.2 472.5L349.2 476.8M360.2 430.5L367.6 435.5M359.3 408.6L370.1 406.8M352 383.4L364 378.5M349.1 361.7L362.4 364.4M357.8 334.8L366.1 341.1M389.4 310.3L390.6 312.6M435.1 307.8L435.1 307.8M469.2 307.6L469.2 308.1M491.1 301.8L491.5 302M430.5 611.8L433.5 611.9M414.6 576.4L417.4 573.7M397 557.4L400.9 553.5M382.6 542.8L388.3 538.8M363 525.4L369.4 519.1M345.2 489.4L357.2 490.3M357 457.7L365.3 461.3M370.7 422.4L380.7 422.4M366.5 389.7L378.5 386.3M362.5 365L375.9 366.8M364.5 344.8L376.9 346.2M378.8 320.5L384.5 326.8M397.1 310.4L397.7 313.4M424.2 307.9L424.2 307.9M461.5 307.7L461.6 308.2M490 303.6L490.4 303.9M433.3 602.3L436.3 602.3M422.2 580.8L425 578.6M397 549.4L401.4 544.6M379.4 529.5L386.3 523M358.1 500.6L370.5 496.5M359.8 476.6L370.8 479.8M377.5 433.6L385 437.5M380.1 406.2L390.6 406M377.8 383.6L389.8 380.3M376.9 344.6L389.7 346.4M390.4 318.5L397.1 323.7M423.5 308L423.5 308.5M457.4 307.7L457.4 308.2M436.2 603.7L439.2 603.7M428.1 583.4L430.9 581.3M404.1 548.5L410.6 545.9M389 526.6L397 520.6M369.6 489.2L383 487.8M380.5 448.5L389.8 450.5M389.4 423.1L398.9 422.8M389.6 377.9L401.5 379.3M389.7 343.8L402.5 346.5M403.2 315.6L408.3 321.7M437.2 307.9L437.2 307.9M483.7 307.5L483.7 308M433.9 587L437.1 585.6M412.6 550.1L419.4 548.4M392.2 512.9L404 508.9M382.8 490.1L396.8 488.7M390.5 448.2L400.5 449.5M398.9 421.2L408.3 422.8M400.8 394.5L411.3 393.5M401.9 348.7L414.6 351.5M405.4 328.5L416 332.9M430.5 308.5L431.1 310.4M460 307.8L460 307.8M437.5 586.9L440.9 586.1M417.6 543.8L425.4 542.3M404 509L416 504M396.4 486.9L410 484M401.1 447.1L411.5 449M407.7 426.5L417.7 425.5M412.2 382.5L423.2 382.3M414.9 341.1L427.2 343.2M435.9 309L437.3 311.7M480.2 307.6L480.2 308.1M441.3 587.6L444.5 586.1M428.6 555.6L435.1 555.2M423.2 527.3L433.6 526.1M415 500.9L428.9 499.2M409.1 476.5L423.6 476.2M413.6 438.8L423.5 440.4M420.4 400.3L429.9 401M426.3 354.3L437.8 355.3M429 325.2L439.9 326.9M466.1 307.8L466.1 307.8M446.2 592.5L449.7 592M436.3 560.8L442.1 559.5M432.8 520.2L444.7 519.4M427.3 493.9L440.8 488.6M422.2 468.9L435.5 466.8M425.3 433L435 436.9M429 406.5L438.5 406.6M434.2 377.8L444.1 379.6M437.7 356.1L448.5 358.3M439.4 334.7L451.2 336.6M450.8 309.5L453.9 313.4M485.3 307.6L485.3 308.1M445.1 574.8L449.5 574.2M441.4 548.2L448.4 549.2M443.9 513.2L455.9 513M435.3 466.2L449.2 464.6M435.6 431.6L445.8 433.7M438.6 406.5L447.8 408.8M446.9 365.9L457.1 368.1M450 344.6L461 345.3M451.8 320.5L462.3 320.2M480.2 307.7L480.2 308.2M449.6 574.8L454.6 574.4M448.2 553.3L455.1 554.5M452.2 531.8L460.2 534.8M456.4 504.6L468.9 503.4M449.2 466L462.9 463M445.5 434.1L456.5 432.9M447.5 410.7L457.4 410.2M453.8 379.4L463.5 381.8M460.9 344.1L471.8 343.1M471.4 308L474.7 310.8M455.8 601.5L458.8 601.9M454.6 578.6L459.1 578.3M460.7 532.9L468.6 535.9M469.2 490.2L482.7 489.1M460.8 457.7L474.1 455.3M456.5 421.8L466.9 420.7M460.3 393.2L469.3 396.2M471 346.9L481.1 349.4M472.5 323.6L483 323.4M488.5 307.7L488.6 308.2M458.8 601.4L461.8 601.2M458.7 572.6L463.6 573.5M467.8 536.5L473.8 541M479.4 507.3L488.8 511.9M469.1 439.4L480.8 437.2M467.7 406.9L478 408.9M474.7 374.4L484.1 376.1M482.5 330.6L492.5 331.8M478.4 402.3L488.4 405.3M462.1 591.8L465.4 592.8M464.8 564.7L470.2 565.6M479.2 530.5L484.9 535.3M465.7 590.1L469.1 590.8M476.4 550.5L481.9 552.8M468.2 593.8L471.7 594.1M478.2 560.2L482.3 563.1M471 595L471 595M489.3 552.5L489.3 552.5"/>
</g>
<path d="M358.8 386.7L358.7 382.5L358.8 378.6L359.2 375.1L359.8 371.7L360.6 368.5L361.4 365.4L362.4 362.2L363.4 359L364.5 355.7L365.7 352.3L367 349L368.4 345.8L369.9 342.6L371.5 339.5L373.2 336.5L374.9 333.7L376.7 331L378.5 328.3L380.4 325.8L382.4 323.3L384.4 321.1L386.5 318.9L388.7 317L391 315.3L393.4 313.8L395.8 312.6L398.4 311.6L401.1 310.7L403.7 310L406.4 309.4L409.1 308.9L411.7 308.4L414.3 308L417 307.8L419.7 307.7L422.4 307.7L425 307.8L427.6 307.9L430.1 308.1L432.5 308.4L434.8 308.7L437 309.1L439.1 309.6L441.1 310.1L443.1 310.7L445 311.4L446.8 312.2L448.6 313L450.3 313.9L451.9 314.9L453.4 315.9L454.9 317L456.3 318.2L457.6 319.5L458.8 320.8L460 322.2L461.1 323.9L462 326.1L462.8 328.4L463.5 330.8L464.3 333L465.1 334.7L466 335.8L467 336L468.2 335.3L469.4 333.7L470.7 331.6L472 329L473.4 326.1L474.9 323.2L476.4 320.5L478 318L479.8 315.6L481.8 313.1L483.9 310.5L486.1 307.9L488.2 305.4L490.1 303.2L491.7 301.4L493 300L493.9 297.1L494.5 291.7L494.8 285.5L494.9 280.1L495 277.2L494.9 278.5L494.9 285.5L495 300L495.6 325.2L496.8 360.9L498.3 403.7L499.6 450L500.3 496.3L500 539.1L498.4 574.8L495 600L489.2 614.5L481.2 621.7L471.6 623L461.2 620.2L450.5 614.9L440.3 608.7L431.3 603.2L424 600L418.3 598.1L413.5 595.6L409.5 592.6L406.1 589.3L403.2 585.8L400.8 582.4L398.8 579L397 576L395.7 573.3L395.2 570.8L395.3 568.3L395.7 565.9L396.3 563.4L396.8 560.8L397.1 558L397 555L396.5 551.7L395.9 548.2L395.2 544.5L394.4 540.8L393.5 536.9L392.6 532.9L391.8 529L391 525L390.2 521L389.5 516.8L388.8 512.6L388 508.3L387.2 504.1L386.5 499.9L385.8 495.9L385 492L384.3 488.4L383.6 485L383 481.8L382.3 478.6L381.6 475.4L380.9 472.2L380 468.7L379 465L377.9 461.1L376.6 457L375.2 452.8L373.7 448.5L372.2 444.1L370.7 439.5L369.3 434.8L368 430L366.7 424.9L365.2 419.4L363.8 413.7L362.4 407.9L361.2 402.2L360.1 396.6L359.3 391.4Z"/>
<path d="M28 595.5Q200 600 493 598.5V616H28Z" fill="url(#stp)" stroke="none"/>
<path d="M28 595.5Q200 600 493 598.5M28 605.6Q250 604.5 493 608M57.7 598L57.7 605.5M127.7 598L127.7 605.5M225.3 598L225.3 605.5M338.9 598L338.9 605.5M438.7 598L438.7 605.5M76.4 606.5L76.4 616M161.6 606.5L161.6 616M230.3 606.5L230.3 616M326.6 606.5L326.6 616M414.2 606.5L414.2 616"/>
</g>
<path d="M262 151L258 171L256 174L244 160L244 151ZM382 151L362 169L351 184L335 178L328 173L334 161L342 151ZM442 151L439 154L414 164L398 176L394 173L382 153L382 151ZM188 180L178 174L164 168L142 166L140 163L140 156L142 154L154 154L165 156L182 162L194 170L188 180ZM405 206L388 184L404 170L420 162L422 164L432 186L405 206ZM492 186L488 188L484 184L478 169L482 164L492 162ZM228 202L218 190L202 174L207 164L224 179L234 193L236 196L228 202ZM117 180L114 176L114 171L116 168L129 166L141 166L144 168L144 174L141 176L127 176L117 180ZM156 212L145 208L134 208L126 210L122 205L122 203L124 200L134 198L150 200L158 202L160 204L160 206L156 212ZM72 262L64 262L62 258L66 238L72 228L76 224L84 231L78 241L74 260L72 262ZM230 278L222 274L222 253L220 238L216 231L219 226L225 226L228 229L230 239L234 257L234 270L232 276L230 278ZM220 280L213 280L210 277L212 254L210 243L216 238L220 241L224 256L224 273L222 277L220 280ZM159 284L150 279L154 273L156 261L165 254L168 257L168 270L164 279L159 284ZM145 294L131 294L128 292L130 286L133 282L140 284L150 278L160 285L152 292L145 294ZM475 320L463 320L460 317L460 314L463 312L474 312L478 316L475 320ZM119 338L109 336L100 329L100 323L104 318L116 324L122 326L126 329L119 338ZM151 340L147 340L144 337L146 330L149 326L159 324L169 320L178 328L174 332L166 336L151 340ZM389 348L382 339L393 326L396 326L402 337L389 348ZM273 420L263 418L258 414L282 392L290 381L298 370L310 347L313 344L324 346L326 349L312 377L290 404L273 420ZM81 394L67 386L48 372L30 354L34 350L38 350L55 366L81 382L84 386L84 391L81 394ZM369 396L366 396L364 394L364 380L366 376L368 374L372 374L374 377L372 394L369 396ZM150 414L126 414L124 411L124 406L126 404L160 402L181 396L183 396L186 401L186 403L180 408L150 414ZM202 460L199 460L196 457L196 453L200 435L205 430L208 435L206 445L204 457L202 460ZM28 438L39 442L51 446L56 449L46 462L28 458ZM292 468L286 462L282 456L280 444L284 440L286 443L290 457L296 464L292 468ZM57 464L50 464L48 461L52 452L57 448L66 450L68 452L57 464ZM249 482L244 478L240 462L240 452L242 450L246 452L248 462L254 478L249 482ZM82 500L78 497L78 481L78 474L81 472L85 472L88 474L90 495L86 498L82 500ZM28 474L44 478L50 481L42 494L28 492ZM420 500L416 500L412 496L408 482L408 478L411 476L421 476L424 478L428 497L426 500L420 500ZM458 534L454 532L452 530L456 506L458 504L466 502L468 505L468 511L462 528L458 534ZM249 542L244 539L238 524L230 508L235 504L238 507L246 524L252 539L249 542ZM473 540L470 538L468 534L478 510L481 508L485 510L488 513L473 540ZM305 538L302 533L310 518L312 516L315 516L318 520L305 538ZM438 560L434 558L434 553L432 522L435 520L441 518L444 521L444 530L442 538L442 557L438 560ZM406 548L404 548L400 544L392 530L390 525L396 520L400 524L410 543L406 548ZM272 554L268 551L268 527L271 524L274 524L276 527L276 532L274 541L274 551L272 554ZM180 558L169 558L166 555L168 547L171 542L199 540L208 538L214 538L216 541L216 552L214 554L180 558ZM249 590L235 580L226 574L218 567L216 560L216 546L219 544L242 569L252 586L249 590ZM446 574L442 569L440 556L440 550L443 548L448 551L448 572L446 574ZM70 572L66 568L62 559L63 556L69 552L74 555L74 565L74 568L70 572ZM28 554L44 554L48 558L48 568L45 570L28 570ZM167 588L110 588L108 585L108 575L112 572L169 572L172 574L172 577L170 583L167 588ZM411 598L359 598L356 596L359 594L380 588L399 582L414 596L411 598ZM125 606L59 606L56 603L56 598L59 596L125 596L128 599L128 603L125 606ZM326 615L326 608L328 606L408 606L412 606L414 609L414 615Z" fill="#000" fill-opacity="0.03" stroke="none"/>
<path d="M222 151L244 173L246 176L244 178L239 180L224 164L206 151ZM294 151L290 164L288 166L278 164L276 162L278 151ZM95 178L92 173L90 167L99 162L127 154L138 154L140 156L140 161L136 166L125 166L113 170L95 178ZM226 220L222 218L216 206L208 197L188 179L196 170L220 191L230 207L234 216L232 218L226 220ZM80 200L76 198L74 194L74 192L79 188L97 176L106 172L112 170L114 173L114 178L111 182L95 188L80 200ZM170 194L153 188L134 188L130 184L130 178L132 176L151 176L169 180L174 185L172 191L170 194ZM432 222L428 219L418 197L441 182L444 186L456 205L432 222ZM384 226L373 216L366 208L387 184L404 206L384 226ZM82 214L75 212L72 208L85 196L100 186L104 189L106 194L82 214ZM177 224L158 211L158 207L162 204L172 208L184 219L181 222L177 224ZM120 228L116 223L114 216L118 212L125 210L149 208L155 210L158 213L149 224L135 222L120 228ZM427 256L425 256L422 253L410 238L414 234L448 210L452 214L462 236L444 248L427 256ZM167 234L150 223L150 221L158 212L166 216L176 224L167 234ZM237 266L232 263L232 246L224 222L226 220L233 218L238 222L244 249L244 262L242 264L237 266ZM333 268L320 264L318 262L326 234L328 226L332 222L346 228L350 231L340 254L336 264L333 268ZM173 254L167 254L162 245L152 236L154 229L157 226L172 242L176 249L173 254ZM149 248L141 244L135 244L127 248L120 241L124 236L131 234L146 234L153 236L156 240L149 248ZM492 280L490 287L485 292L446 292L442 288L440 278L443 274L460 270L470 266L478 259L492 238ZM80 268L76 268L74 266L74 259L76 245L80 242L85 242L88 245L84 257L84 265L80 268ZM111 272L106 267L108 254L112 247L118 242L120 242L126 248L120 257L118 266L111 272ZM187 282L178 282L176 279L178 270L178 259L176 251L186 242L190 247L192 255L192 273L190 278L187 282ZM146 254L142 252L133 252L130 249L130 247L132 244L137 244L144 244L152 250L146 254ZM151 278L146 273L150 268L150 260L146 255L151 250L156 258L156 270L151 278ZM127 292L120 290L112 282L108 273L110 270L117 268L122 277L130 283L130 289L127 292ZM222 308L218 306L214 302L220 290L222 278L224 276L230 278L232 280L230 294L224 306L222 308ZM151 304L148 301L148 294L156 288L164 280L172 287L162 298L151 304ZM78 326L76 326L72 323L60 305L54 293L57 290L64 290L68 293L74 306L86 320L82 324L78 326ZM384 320L382 318L382 313L396 296L406 305L403 310L392 314L384 320ZM175 344L173 344L168 337L170 332L180 328L192 318L197 318L202 322L191 334L175 344ZM72 364L63 360L50 347L40 335L38 333L41 330L47 326L64 346L78 356L72 364ZM143 340L129 340L123 340L120 337L127 328L144 328L146 332L146 338L143 340ZM175 368L172 368L166 361L166 359L168 356L183 350L197 342L203 336L210 344L205 350L197 356L175 368ZM451 368L448 366L442 358L428 350L432 341L435 338L440 338L446 342L452 350L456 360L456 364L451 368ZM138 374L126 374L109 370L104 367L104 361L108 356L124 360L134 360L140 365L140 371L138 374ZM363 386L358 383L358 373L360 367L365 364L368 368L366 377L366 384L363 386ZM442 394L439 394L429 384L418 382L414 379L412 369L415 366L427 366L436 370L444 381L444 392L442 394ZM383 408L380 408L378 405L378 392L384 376L386 372L390 368L396 376L392 383L386 396L386 405L383 408ZM153 396L135 396L132 393L132 388L136 384L153 384L165 380L168 380L170 383L172 389L168 392L153 396ZM402 406L399 404L394 399L400 390L409 382L427 382L436 389L427 400L422 398L414 398L408 400L402 406ZM121 412L102 410L90 408L64 396L60 392L67 386L83 394L92 398L113 402L121 402L124 405L124 410L121 412ZM236 430L232 428L230 424L226 419L243 408L255 398L264 409L236 430ZM492 464L488 460L478 427L476 409L478 405L480 402L486 404L488 406L488 419L492 432ZM319 476L306 461L316 450L332 421L342 410L351 414L354 418L348 428L334 457L326 469L319 476ZM444 466L437 466L434 462L434 437L437 432L443 432L446 435L446 451L448 462L444 466ZM426 468L424 468L420 463L422 444L424 435L426 432L431 434L434 438L434 465L432 468L426 468ZM238 476L234 473L232 465L232 446L234 442L236 440L240 442L240 454L240 464L244 472L238 476ZM68 476L62 470L71 454L74 457L74 460L72 472L68 476ZM259 486L256 482L248 467L248 461L250 458L252 458L256 462L264 480L259 486ZM126 486L100 484L98 482L94 471L97 468L109 470L125 470L128 473L128 478L128 483L126 486ZM222 522L206 497L208 492L212 492L214 494L218 504L228 518L225 522L222 522ZM366 550L362 546L358 531L366 524L380 510L385 504L388 506L392 533L376 546L366 550ZM492 522L484 534L478 530L490 506L492 504ZM186 528L181 528L178 525L180 516L184 512L208 508L212 512L216 520L211 524L186 528ZM241 550L222 523L224 520L227 520L234 528L244 547L241 550ZM492 536L484 550L480 552L476 548L492 524ZM456 578L454 576L452 569L454 555L458 538L462 532L465 534L468 537L462 551L458 565L458 576L456 578ZM87 576L82 572L82 567L84 556L87 554L91 554L96 557L90 567L90 573L87 576ZM216 570L210 570L208 567L208 556L210 554L214 554L216 556L218 567L216 570ZM121 572L100 572L98 569L107 558L125 558L128 560L124 570L121 572ZM65 586L51 586L48 583L52 574L55 570L58 570L62 574L68 583L65 586ZM336 606L227 606L224 603L224 600L227 598L336 598L338 600L338 604L336 606ZM76 615L76 607L78 604L159 604L162 607L162 615ZM160 615L160 607L163 604L228 604L230 607L230 615Z" fill="#000" fill-opacity="0.05" stroke="none"/>
<path d="M28 178L32 172L50 156L58 161L40 179L28 194ZM457 206L454 203L442 183L445 180L462 172L476 168L480 171L486 186L457 206ZM304 234L290 234L288 232L288 220L294 194L300 178L302 176L318 182L322 185L316 198L308 230L304 234ZM109 208L106 205L104 197L110 192L131 186L149 186L152 189L148 197L146 200L133 200L121 202L120 202L109 208ZM63 246L57 246L54 243L64 220L68 214L73 210L82 215L74 225L66 242L63 246ZM444 274L440 271L432 256L435 252L455 242L471 228L488 243L478 258L469 268L462 270L444 274ZM261 298L255 296L252 293L256 270L256 253L254 248L252 236L256 232L261 230L264 235L268 257L266 289L264 294L261 298ZM383 288L381 288L371 280L368 278L370 276L389 254L409 238L424 256L397 274L383 288ZM270 304L264 302L262 300L266 278L266 252L264 242L269 238L273 238L276 241L278 268L274 297L272 301L270 304ZM101 276L96 271L96 259L100 247L103 244L106 244L112 249L108 260L108 270L101 276ZM171 286L164 278L168 266L166 255L169 252L175 252L178 255L178 261L178 273L174 282L171 286ZM28 278L30 280L32 290L38 309L48 326L39 332L34 326L28 314ZM202 322L192 316L200 308L204 299L210 285L210 281L212 278L219 278L222 281L222 285L218 295L212 310L202 322ZM136 306L127 304L119 302L112 295L119 288L126 292L133 294L138 297L138 303L136 306ZM156 326L154 326L150 320L153 316L164 312L175 304L180 311L169 320L156 326ZM440 322L429 320L417 320L414 318L414 310L417 308L433 308L441 310L444 314L442 320L440 322ZM145 328L131 328L120 326L116 323L116 318L119 316L129 318L148 318L152 325L150 328L145 328ZM326 380L316 376L314 372L320 363L328 346L334 331L336 318L339 316L349 320L352 323L340 354L332 372L326 380ZM28 338L36 348L34 352L30 354L28 352ZM265 408L256 399L256 397L268 386L278 373L292 350L298 344L307 348L310 350L308 354L296 373L282 391L265 408ZM385 374L380 370L378 366L384 355L388 350L396 359L385 374ZM448 380L443 380L438 373L434 370L426 368L422 364L424 356L427 352L431 352L438 354L446 361L450 372L450 377L448 380ZM28 364L53 388L63 396L72 400L82 404L84 406L75 420L57 412L47 406L38 400L28 388ZM130 396L110 394L99 390L76 380L74 377L76 373L80 370L106 380L131 384L134 386L134 392L130 396ZM200 416L196 413L196 406L196 402L198 400L218 390L236 376L246 385L243 390L231 398L200 416ZM370 424L366 421L366 409L364 399L366 396L369 396L372 399L372 421L370 424ZM384 436L378 432L380 427L378 409L380 406L386 411L386 422L390 426L386 434L384 436ZM492 500L490 506L487 510L481 508L478 506L482 494L482 482L480 472L468 441L472 438L479 436L482 439L492 466ZM420 476L411 476L408 474L410 451L412 442L415 438L419 438L422 442L422 474L420 476ZM232 470L228 470L226 468L226 446L228 444L230 444L234 447L232 455L234 468L232 470ZM151 472L118 472L114 468L112 458L115 456L143 456L175 454L180 452L182 454L182 465L180 468L151 472ZM113 470L96 470L92 466L88 456L90 454L111 456L114 458L116 466L113 470ZM276 480L272 477L260 459L265 456L268 458L272 466L280 476L276 480ZM268 484L264 482L256 467L254 461L257 458L260 458L262 461L274 480L268 484ZM297 482L282 468L286 464L302 478L297 482ZM453 514L446 514L442 510L442 493L434 468L439 464L447 464L450 466L452 473L456 497L456 508L453 514ZM53 496L49 494L46 489L56 470L60 468L64 471L56 491L53 496ZM94 496L91 496L88 494L88 478L90 476L94 476L98 479L98 488L100 492L98 496L94 496ZM259 506L256 504L246 483L251 480L254 480L256 482L266 502L263 506L259 506ZM277 502L272 498L268 487L268 485L272 482L274 482L278 485L284 497L277 502ZM393 512L390 510L386 504L384 491L387 488L394 488L398 492L400 500L404 507L401 510L393 512ZM467 534L464 534L460 530L466 513L468 503L468 492L474 488L480 488L482 492L480 507L472 528L467 534ZM116 514L111 514L108 511L104 502L106 498L119 500L122 502L118 512L116 514ZM40 540L34 540L32 538L28 526L31 524L35 524L40 527L42 538L40 540ZM367 572L356 556L360 552L377 544L391 534L394 537L394 541L396 558L393 562L385 566L367 572ZM421 598L413 596L402 584L394 572L397 568L422 593L424 596L421 598Z" fill="#000" fill-opacity="0.07" stroke="none"/>
</svg>
<div class="t" style="left:525.7px;top:159.5px;font-size:11px;letter-spacing:-0.114px;color:#333333">Position</div>
<div class="cb" style="left:652px;top:157px;width:18px;height:18px"></div>
<div class="t" style="left:678.0px;top:159.7px;font-size:11px;letter-spacing:-0.24px;color:#333333">Vorderseite</div>
<div class="cb" style="left:777px;top:157px;width:18px;height:18px"></div>
<svg class="a" style="left:777px;top:157px" width="18" height="18" viewBox="0 0 18 18"><path d="M3.6 10.2 L7.3 14.2 Q9.6 7.6 14.3 2.6" fill="none" stroke="#000" stroke-width="1.9" stroke-linecap="round"/></svg>
<div class="t" style="left:802.3px;top:159.7px;font-size:11px;letter-spacing:-0.35px;color:#333333">Rückseite</div>
<div class="t" style="left:526.7px;top:210.4px;font-size:11px;letter-spacing:-0.45px;color:#222222;font-weight:bold">Rückseite</div><div class="t" style="left:525.8px;top:233.0px;font-size:11px;letter-spacing:-0.232px;color:#333333">Registrierungs-Layer</div>
<div class="sel" style="top:227px"><i></i></div><div class="t" style="left:657.6px;top:233.6px;font-size:11px;letter-spacing:-0.325px;color:#333333">2 Seiten PDF - p1 - Farbe</div>
<div class="t" style="left:527.0px;top:267.8px;font-size:11px;letter-spacing:-0.7px;color:#333333">Typ</div>
<div class="sel" style="top:262px"><i></i></div><div class="t" style="left:656.6px;top:268.7px;font-size:11px;letter-spacing:0.133px;color:#333333">Bild</div>
<div class="t" style="left:526.1px;top:302.3px;font-size:12.5px;letter-spacing:-0.178px;color:#333333">Horizontal</div><div class="t" style="left:527.1px;top:319.0px;font-size:12.5px;letter-spacing:-0.629px;color:#333333">spiegeln</div>
<div class="cb" style="left:653px;top:298px;width:20px;height:20px"></div>
<div class="t" style="left:527.0px;top:349.4px;font-size:12.5px;letter-spacing:-0.312px;color:#333333">Vertikal spiegeln</div>
<div class="cb" style="left:653px;top:345px;width:20px;height:20px"></div>
<div class="t" style="left:526.0px;top:380.6px;font-size:12.5px;letter-spacing:-0.311px;color:#333333">Überdrucke</div>
<div class="a" style="left:653px;top:375px;width:75px;height:23px;border:1px solid #a0a0a0;background:#fff"></div>
<div class="t" style="left:658.5px;top:381.5px;font-size:12px;letter-spacing:0.0px;color:#333333">0</div>
<div class="t" style="left:527.0px;top:414.9px;font-size:11px;letter-spacing:-0.04px;color:#333333">Medien</div>
<div class="sel" style="top:409px"><i></i></div><div class="t" style="left:657.8px;top:416.0px;font-size:11px;letter-spacing:-0.35px;color:#333333">Generic Xpert</div>
<div class="t" style="left:526.0px;top:449.6px;font-size:11px;letter-spacing:-0.089px;color:#333333">Druckmodus</div>
<div class="sel" style="top:444px"><i></i></div><div class="t" style="left:656.8px;top:450.8px;font-size:11px;letter-spacing:-0.178px;color:#333333">Production S1 to WK</div>
<div class="btn" style="left:526px;top:478px;width:260px;height:23px"></div>
<div class="t" style="left:540.6px;top:482.7px;font-size:13px;letter-spacing:-0.245px;color:#111111">Registrierung für Rückseite herunterladen</div>
</body></html>
